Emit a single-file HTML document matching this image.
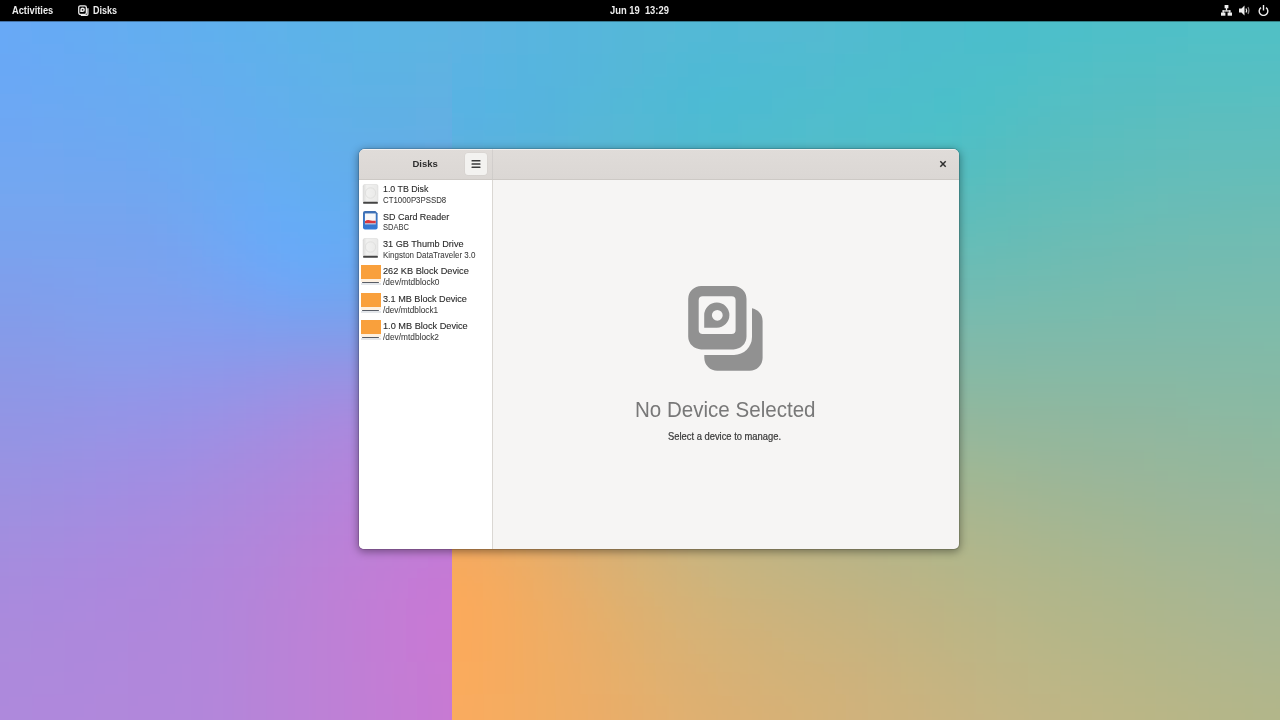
<!DOCTYPE html>
<html><head><meta charset="utf-8">
<style>
*{margin:0;padding:0;box-sizing:border-box}
html,body{width:1280px;height:720px;overflow:hidden;font-family:"Liberation Sans",sans-serif}
body{position:relative;background:#000}
.abs{position:absolute}
#bgL{left:0;top:0;width:452px;height:720px;overflow:hidden}
#bgR{left:452px;top:0;width:828px;height:720px;overflow:hidden}
.layer{position:absolute;left:0;top:0;width:100%;height:100%}
#topbar{will-change:transform;left:0;top:0;width:1280px;height:21px;background:#000;color:#ececec;font-weight:bold}
.t{position:absolute;white-space:nowrap;line-height:1}
#win{will-change:transform;left:359px;top:149px;width:600px;height:400px;border-radius:6px 6px 5px 5px;overflow:hidden;background:#f6f5f4;box-shadow:0 2px 9px 1px rgba(0,0,0,.38),0 0 0 1px rgba(0,0,0,.12)}
#hdr{left:0;top:0;width:600px;height:31px;background:linear-gradient(#e0dcd9,#dbd7d4);border-bottom:1px solid #cdc9c5;box-shadow:inset 0 1px 0 rgba(255,255,255,.6)}
#hsep{left:133px;top:0;width:1px;height:30px;background:rgba(0,0,0,.05)}
#side{left:0;top:31px;width:134px;height:369px;background:#fff;border-right:1px solid #dad7d3}
.ti{position:absolute;left:24px;font-size:9.9px;color:#2a2a2a;white-space:nowrap;line-height:1;transform:scaleX(.93);transform-origin:0 0;-webkit-text-stroke:.12px #2a2a2a}
.st{position:absolute;left:24px;font-size:8.6px;color:#3a3a3a;white-space:nowrap;line-height:1;transform:scaleX(.94);transform-origin:0 0;-webkit-text-stroke:.05px #3a3a3a}
</style></head><body>
<div id="bgL" class="abs"><svg class="abs" style="left:0;top:0" width="452" height="720"><defs><filter id="bl" x="-20%" y="-20%" width="140%" height="140%" filterUnits="objectBoundingBox"><feGaussianBlur stdDeviation="18"/></filter></defs><g filter="url(#bl)"><rect x="-64" y="-42" width="32" height="32" fill="#66a9f6"/><rect x="-32" y="-42" width="32" height="32" fill="#66a9f6"/><rect x="0" y="-42" width="32" height="32" fill="#66a9f6"/><rect x="32" y="-42" width="32" height="32" fill="#65aaf4"/><rect x="64" y="-42" width="32" height="32" fill="#64abf3"/><rect x="96" y="-42" width="32" height="32" fill="#63acf2"/><rect x="128" y="-42" width="32" height="32" fill="#62adf1"/><rect x="160" y="-42" width="32" height="32" fill="#61aeef"/><rect x="192" y="-42" width="32" height="32" fill="#60b0ed"/><rect x="224" y="-42" width="32" height="32" fill="#5eb1ec"/><rect x="256" y="-42" width="32" height="32" fill="#5db2ea"/><rect x="288" y="-42" width="32" height="32" fill="#5cb3e8"/><rect x="320" y="-42" width="32" height="32" fill="#5bb4e6"/><rect x="352" y="-42" width="32" height="32" fill="#5bb4e5"/><rect x="384" y="-42" width="32" height="32" fill="#5bb5e3"/><rect x="416" y="-42" width="32" height="32" fill="#5bb4e3"/><rect x="448" y="-42" width="32" height="32" fill="#5cb4e2"/><rect x="480" y="-42" width="32" height="32" fill="#5cb4e2"/><rect x="512" y="-42" width="32" height="32" fill="#5cb4e2"/><rect x="-64" y="-10" width="32" height="32" fill="#66a9f6"/><rect x="-32" y="-10" width="32" height="32" fill="#66a9f6"/><rect x="0" y="-10" width="32" height="32" fill="#66a9f6"/><rect x="32" y="-10" width="32" height="32" fill="#65aaf4"/><rect x="64" y="-10" width="32" height="32" fill="#64abf3"/><rect x="96" y="-10" width="32" height="32" fill="#63acf2"/><rect x="128" y="-10" width="32" height="32" fill="#62adf1"/><rect x="160" y="-10" width="32" height="32" fill="#61aeef"/><rect x="192" y="-10" width="32" height="32" fill="#60b0ed"/><rect x="224" y="-10" width="32" height="32" fill="#5eb1ec"/><rect x="256" y="-10" width="32" height="32" fill="#5db2ea"/><rect x="288" y="-10" width="32" height="32" fill="#5cb3e8"/><rect x="320" y="-10" width="32" height="32" fill="#5bb4e6"/><rect x="352" y="-10" width="32" height="32" fill="#5bb4e5"/><rect x="384" y="-10" width="32" height="32" fill="#5bb5e3"/><rect x="416" y="-10" width="32" height="32" fill="#5bb4e3"/><rect x="448" y="-10" width="32" height="32" fill="#5cb4e2"/><rect x="480" y="-10" width="32" height="32" fill="#5cb4e2"/><rect x="512" y="-10" width="32" height="32" fill="#5cb4e2"/><rect x="-64" y="22" width="32" height="32" fill="#67a9f6"/><rect x="-32" y="22" width="32" height="32" fill="#67a9f6"/><rect x="0" y="22" width="32" height="32" fill="#67a9f5"/><rect x="32" y="22" width="32" height="32" fill="#66aaf4"/><rect x="64" y="22" width="32" height="32" fill="#66abf3"/><rect x="96" y="22" width="32" height="32" fill="#65acf2"/><rect x="128" y="22" width="32" height="32" fill="#63adf0"/><rect x="160" y="22" width="32" height="32" fill="#62aeef"/><rect x="192" y="22" width="32" height="32" fill="#61afee"/><rect x="224" y="22" width="32" height="32" fill="#5fb0ec"/><rect x="256" y="22" width="32" height="32" fill="#5eb1ea"/><rect x="288" y="22" width="32" height="32" fill="#5db2e8"/><rect x="320" y="22" width="32" height="32" fill="#5cb3e6"/><rect x="352" y="22" width="32" height="32" fill="#5bb4e5"/><rect x="384" y="22" width="32" height="32" fill="#5bb4e3"/><rect x="416" y="22" width="32" height="32" fill="#5cb4e2"/><rect x="448" y="22" width="32" height="32" fill="#5db3e2"/><rect x="480" y="22" width="32" height="32" fill="#5db3e2"/><rect x="512" y="22" width="32" height="32" fill="#5db3e2"/><rect x="-64" y="54" width="32" height="32" fill="#6aa8f5"/><rect x="-32" y="54" width="32" height="32" fill="#6aa8f5"/><rect x="0" y="54" width="32" height="32" fill="#69a8f5"/><rect x="32" y="54" width="32" height="32" fill="#69a9f4"/><rect x="64" y="54" width="32" height="32" fill="#68aaf3"/><rect x="96" y="54" width="32" height="32" fill="#67abf2"/><rect x="128" y="54" width="32" height="32" fill="#66acf1"/><rect x="160" y="54" width="32" height="32" fill="#65adef"/><rect x="192" y="54" width="32" height="32" fill="#63aeee"/><rect x="224" y="54" width="32" height="32" fill="#62afed"/><rect x="256" y="54" width="32" height="32" fill="#60b0eb"/><rect x="288" y="54" width="32" height="32" fill="#5fb1e9"/><rect x="320" y="54" width="32" height="32" fill="#5eb2e7"/><rect x="352" y="54" width="32" height="32" fill="#5db3e5"/><rect x="384" y="54" width="32" height="32" fill="#5db3e3"/><rect x="416" y="54" width="32" height="32" fill="#5eb3e2"/><rect x="448" y="54" width="32" height="32" fill="#5fb2e2"/><rect x="480" y="54" width="32" height="32" fill="#5fb2e2"/><rect x="512" y="54" width="32" height="32" fill="#5fb2e2"/><rect x="-64" y="86" width="32" height="32" fill="#6ca8f4"/><rect x="-32" y="86" width="32" height="32" fill="#6ca8f4"/><rect x="0" y="86" width="32" height="32" fill="#6ca8f4"/><rect x="32" y="86" width="32" height="32" fill="#6ba9f3"/><rect x="64" y="86" width="32" height="32" fill="#6ba9f2"/><rect x="96" y="86" width="32" height="32" fill="#6aaaf1"/><rect x="128" y="86" width="32" height="32" fill="#68abf1"/><rect x="160" y="86" width="32" height="32" fill="#67acf0"/><rect x="192" y="86" width="32" height="32" fill="#65adef"/><rect x="224" y="86" width="32" height="32" fill="#63aeee"/><rect x="256" y="86" width="32" height="32" fill="#62afec"/><rect x="288" y="86" width="32" height="32" fill="#61b0ea"/><rect x="320" y="86" width="32" height="32" fill="#60b1e8"/><rect x="352" y="86" width="32" height="32" fill="#5fb1e5"/><rect x="384" y="86" width="32" height="32" fill="#5fb1e4"/><rect x="416" y="86" width="32" height="32" fill="#60b1e3"/><rect x="448" y="86" width="32" height="32" fill="#61b0e2"/><rect x="480" y="86" width="32" height="32" fill="#61b0e2"/><rect x="512" y="86" width="32" height="32" fill="#61b0e2"/><rect x="-64" y="118" width="32" height="32" fill="#6ea7f3"/><rect x="-32" y="118" width="32" height="32" fill="#6ea7f3"/><rect x="0" y="118" width="32" height="32" fill="#6ea7f3"/><rect x="32" y="118" width="32" height="32" fill="#6ea8f2"/><rect x="64" y="118" width="32" height="32" fill="#6da8f2"/><rect x="96" y="118" width="32" height="32" fill="#6ca9f1"/><rect x="128" y="118" width="32" height="32" fill="#6ba9f1"/><rect x="160" y="118" width="32" height="32" fill="#69aaf0"/><rect x="192" y="118" width="32" height="32" fill="#67acf0"/><rect x="224" y="118" width="32" height="32" fill="#65adef"/><rect x="256" y="118" width="32" height="32" fill="#63aeee"/><rect x="288" y="118" width="32" height="32" fill="#62afec"/><rect x="320" y="118" width="32" height="32" fill="#62afe9"/><rect x="352" y="118" width="32" height="32" fill="#62afe7"/><rect x="384" y="118" width="32" height="32" fill="#62afe5"/><rect x="416" y="118" width="32" height="32" fill="#63afe4"/><rect x="448" y="118" width="32" height="32" fill="#64aee3"/><rect x="480" y="118" width="32" height="32" fill="#64aee3"/><rect x="512" y="118" width="32" height="32" fill="#64aee3"/><rect x="-64" y="150" width="32" height="32" fill="#71a7f2"/><rect x="-32" y="150" width="32" height="32" fill="#71a7f2"/><rect x="0" y="150" width="32" height="32" fill="#71a7f2"/><rect x="32" y="150" width="32" height="32" fill="#71a7f1"/><rect x="64" y="150" width="32" height="32" fill="#70a7f1"/><rect x="96" y="150" width="32" height="32" fill="#6fa7f1"/><rect x="128" y="150" width="32" height="32" fill="#6ea8f1"/><rect x="160" y="150" width="32" height="32" fill="#6ca9f1"/><rect x="192" y="150" width="32" height="32" fill="#6aaaf1"/><rect x="224" y="150" width="32" height="32" fill="#67acf2"/><rect x="256" y="150" width="32" height="32" fill="#65adf1"/><rect x="288" y="150" width="32" height="32" fill="#63aeef"/><rect x="320" y="150" width="32" height="32" fill="#63aeec"/><rect x="352" y="150" width="32" height="32" fill="#63aee9"/><rect x="384" y="150" width="32" height="32" fill="#64ade7"/><rect x="416" y="150" width="32" height="32" fill="#66ade5"/><rect x="448" y="150" width="32" height="32" fill="#67ace4"/><rect x="480" y="150" width="32" height="32" fill="#67ace4"/><rect x="512" y="150" width="32" height="32" fill="#67ace4"/><rect x="-64" y="182" width="32" height="32" fill="#74a5f0"/><rect x="-32" y="182" width="32" height="32" fill="#74a5f0"/><rect x="0" y="182" width="32" height="32" fill="#74a6f0"/><rect x="32" y="182" width="32" height="32" fill="#74a6f0"/><rect x="64" y="182" width="32" height="32" fill="#73a6f0"/><rect x="96" y="182" width="32" height="32" fill="#73a6f0"/><rect x="128" y="182" width="32" height="32" fill="#72a6f0"/><rect x="160" y="182" width="32" height="32" fill="#6fa7f1"/><rect x="192" y="182" width="32" height="32" fill="#6ca9f2"/><rect x="224" y="182" width="32" height="32" fill="#69aaf4"/><rect x="256" y="182" width="32" height="32" fill="#66acf4"/><rect x="288" y="182" width="32" height="32" fill="#64adf3"/><rect x="320" y="182" width="32" height="32" fill="#64adf0"/><rect x="352" y="182" width="32" height="32" fill="#65aced"/><rect x="384" y="182" width="32" height="32" fill="#66acea"/><rect x="416" y="182" width="32" height="32" fill="#69aae7"/><rect x="448" y="182" width="32" height="32" fill="#6ba9e5"/><rect x="480" y="182" width="32" height="32" fill="#6ba9e5"/><rect x="512" y="182" width="32" height="32" fill="#6ba9e5"/><rect x="-64" y="214" width="32" height="32" fill="#77a4ef"/><rect x="-32" y="214" width="32" height="32" fill="#77a4ef"/><rect x="0" y="214" width="32" height="32" fill="#77a4ef"/><rect x="32" y="214" width="32" height="32" fill="#77a4ef"/><rect x="64" y="214" width="32" height="32" fill="#77a4ef"/><rect x="96" y="214" width="32" height="32" fill="#77a4ef"/><rect x="128" y="214" width="32" height="32" fill="#76a4ef"/><rect x="160" y="214" width="32" height="32" fill="#73a5f1"/><rect x="192" y="214" width="32" height="32" fill="#70a7f3"/><rect x="224" y="214" width="32" height="32" fill="#6ca9f5"/><rect x="256" y="214" width="32" height="32" fill="#68aaf7"/><rect x="288" y="214" width="32" height="32" fill="#65acf7"/><rect x="320" y="214" width="32" height="32" fill="#65acf4"/><rect x="352" y="214" width="32" height="32" fill="#67abf0"/><rect x="384" y="214" width="32" height="32" fill="#69a9ec"/><rect x="416" y="214" width="32" height="32" fill="#6da8e8"/><rect x="448" y="214" width="32" height="32" fill="#6fa6e6"/><rect x="480" y="214" width="32" height="32" fill="#6fa6e6"/><rect x="512" y="214" width="32" height="32" fill="#6fa6e6"/><rect x="-64" y="246" width="32" height="32" fill="#7ba1ed"/><rect x="-32" y="246" width="32" height="32" fill="#7ba1ed"/><rect x="0" y="246" width="32" height="32" fill="#7ba1ed"/><rect x="32" y="246" width="32" height="32" fill="#7ba2ed"/><rect x="64" y="246" width="32" height="32" fill="#7ba2ee"/><rect x="96" y="246" width="32" height="32" fill="#7aa2ee"/><rect x="128" y="246" width="32" height="32" fill="#7aa2ef"/><rect x="160" y="246" width="32" height="32" fill="#78a3f0"/><rect x="192" y="246" width="32" height="32" fill="#74a5f2"/><rect x="224" y="246" width="32" height="32" fill="#70a6f5"/><rect x="256" y="246" width="32" height="32" fill="#6ca8f7"/><rect x="288" y="246" width="32" height="32" fill="#69aaf8"/><rect x="320" y="246" width="32" height="32" fill="#68a9f5"/><rect x="352" y="246" width="32" height="32" fill="#6ba8f0"/><rect x="384" y="246" width="32" height="32" fill="#6fa6ec"/><rect x="416" y="246" width="32" height="32" fill="#73a4e8"/><rect x="448" y="246" width="32" height="32" fill="#75a3e6"/><rect x="480" y="246" width="32" height="32" fill="#75a3e6"/><rect x="512" y="246" width="32" height="32" fill="#75a3e6"/><rect x="-64" y="278" width="32" height="32" fill="#809eeb"/><rect x="-32" y="278" width="32" height="32" fill="#809eeb"/><rect x="0" y="278" width="32" height="32" fill="#809eeb"/><rect x="32" y="278" width="32" height="32" fill="#7f9fec"/><rect x="64" y="278" width="32" height="32" fill="#7fa0ed"/><rect x="96" y="278" width="32" height="32" fill="#7ea1ee"/><rect x="128" y="278" width="32" height="32" fill="#7ea1ee"/><rect x="160" y="278" width="32" height="32" fill="#7da1ef"/><rect x="192" y="278" width="32" height="32" fill="#7aa2f1"/><rect x="224" y="278" width="32" height="32" fill="#77a3f2"/><rect x="256" y="278" width="32" height="32" fill="#74a4f4"/><rect x="288" y="278" width="32" height="32" fill="#71a5f4"/><rect x="320" y="278" width="32" height="32" fill="#6fa5f1"/><rect x="352" y="278" width="32" height="32" fill="#72a4ee"/><rect x="384" y="278" width="32" height="32" fill="#76a2ea"/><rect x="416" y="278" width="32" height="32" fill="#7ba0e7"/><rect x="448" y="278" width="32" height="32" fill="#7d9ee5"/><rect x="480" y="278" width="32" height="32" fill="#7d9ee5"/><rect x="512" y="278" width="32" height="32" fill="#7d9ee5"/><rect x="-64" y="310" width="32" height="32" fill="#849be9"/><rect x="-32" y="310" width="32" height="32" fill="#849be9"/><rect x="0" y="310" width="32" height="32" fill="#849ce9"/><rect x="32" y="310" width="32" height="32" fill="#849dea"/><rect x="64" y="310" width="32" height="32" fill="#839eeb"/><rect x="96" y="310" width="32" height="32" fill="#839eec"/><rect x="128" y="310" width="32" height="32" fill="#839eed"/><rect x="160" y="310" width="32" height="32" fill="#839eed"/><rect x="192" y="310" width="32" height="32" fill="#829eee"/><rect x="224" y="310" width="32" height="32" fill="#809eee"/><rect x="256" y="310" width="32" height="32" fill="#7e9fee"/><rect x="288" y="310" width="32" height="32" fill="#7d9fed"/><rect x="320" y="310" width="32" height="32" fill="#7c9fec"/><rect x="352" y="310" width="32" height="32" fill="#7e9eea"/><rect x="384" y="310" width="32" height="32" fill="#829ce7"/><rect x="416" y="310" width="32" height="32" fill="#859ae5"/><rect x="448" y="310" width="32" height="32" fill="#8799e3"/><rect x="480" y="310" width="32" height="32" fill="#8799e3"/><rect x="512" y="310" width="32" height="32" fill="#8799e3"/><rect x="-64" y="342" width="32" height="32" fill="#8999e7"/><rect x="-32" y="342" width="32" height="32" fill="#8999e7"/><rect x="0" y="342" width="32" height="32" fill="#8999e7"/><rect x="32" y="342" width="32" height="32" fill="#899ae8"/><rect x="64" y="342" width="32" height="32" fill="#899be9"/><rect x="96" y="342" width="32" height="32" fill="#899bea"/><rect x="128" y="342" width="32" height="32" fill="#899beb"/><rect x="160" y="342" width="32" height="32" fill="#8a9aeb"/><rect x="192" y="342" width="32" height="32" fill="#8a9aeb"/><rect x="224" y="342" width="32" height="32" fill="#8a99ea"/><rect x="256" y="342" width="32" height="32" fill="#8b99e9"/><rect x="288" y="342" width="32" height="32" fill="#8c98e7"/><rect x="320" y="342" width="32" height="32" fill="#8d97e6"/><rect x="352" y="342" width="32" height="32" fill="#8e96e5"/><rect x="384" y="342" width="32" height="32" fill="#8f95e4"/><rect x="416" y="342" width="32" height="32" fill="#9194e2"/><rect x="448" y="342" width="32" height="32" fill="#9393e1"/><rect x="480" y="342" width="32" height="32" fill="#9393e1"/><rect x="512" y="342" width="32" height="32" fill="#9393e1"/><rect x="-64" y="374" width="32" height="32" fill="#8d97e5"/><rect x="-32" y="374" width="32" height="32" fill="#8d97e5"/><rect x="0" y="374" width="32" height="32" fill="#8e97e6"/><rect x="32" y="374" width="32" height="32" fill="#8e97e6"/><rect x="64" y="374" width="32" height="32" fill="#8e97e7"/><rect x="96" y="374" width="32" height="32" fill="#8f97e8"/><rect x="128" y="374" width="32" height="32" fill="#9097e8"/><rect x="160" y="374" width="32" height="32" fill="#9196e8"/><rect x="192" y="374" width="32" height="32" fill="#9395e8"/><rect x="224" y="374" width="32" height="32" fill="#9494e6"/><rect x="256" y="374" width="32" height="32" fill="#9793e5"/><rect x="288" y="374" width="32" height="32" fill="#9a91e3"/><rect x="320" y="374" width="32" height="32" fill="#9c90e2"/><rect x="352" y="374" width="32" height="32" fill="#9d8fe1"/><rect x="384" y="374" width="32" height="32" fill="#9d8fe0"/><rect x="416" y="374" width="32" height="32" fill="#9d8edf"/><rect x="448" y="374" width="32" height="32" fill="#9e8edf"/><rect x="480" y="374" width="32" height="32" fill="#9e8edf"/><rect x="512" y="374" width="32" height="32" fill="#9e8edf"/><rect x="-64" y="406" width="32" height="32" fill="#9295e4"/><rect x="-32" y="406" width="32" height="32" fill="#9295e4"/><rect x="0" y="406" width="32" height="32" fill="#9295e4"/><rect x="32" y="406" width="32" height="32" fill="#9395e5"/><rect x="64" y="406" width="32" height="32" fill="#9494e5"/><rect x="96" y="406" width="32" height="32" fill="#9594e6"/><rect x="128" y="406" width="32" height="32" fill="#9693e6"/><rect x="160" y="406" width="32" height="32" fill="#9892e5"/><rect x="192" y="406" width="32" height="32" fill="#9a91e5"/><rect x="224" y="406" width="32" height="32" fill="#9d90e3"/><rect x="256" y="406" width="32" height="32" fill="#a08ee2"/><rect x="288" y="406" width="32" height="32" fill="#a48ce0"/><rect x="320" y="406" width="32" height="32" fill="#a88adf"/><rect x="352" y="406" width="32" height="32" fill="#a989de"/><rect x="384" y="406" width="32" height="32" fill="#a889dd"/><rect x="416" y="406" width="32" height="32" fill="#a889dd"/><rect x="448" y="406" width="32" height="32" fill="#a888dc"/><rect x="480" y="406" width="32" height="32" fill="#a888dc"/><rect x="512" y="406" width="32" height="32" fill="#a888dc"/><rect x="-64" y="438" width="32" height="32" fill="#9693e2"/><rect x="-32" y="438" width="32" height="32" fill="#9693e2"/><rect x="0" y="438" width="32" height="32" fill="#9793e3"/><rect x="32" y="438" width="32" height="32" fill="#9892e3"/><rect x="64" y="438" width="32" height="32" fill="#9992e3"/><rect x="96" y="438" width="32" height="32" fill="#9b91e4"/><rect x="128" y="438" width="32" height="32" fill="#9c90e3"/><rect x="160" y="438" width="32" height="32" fill="#9e8fe3"/><rect x="192" y="438" width="32" height="32" fill="#a18ee2"/><rect x="224" y="438" width="32" height="32" fill="#a48ce0"/><rect x="256" y="438" width="32" height="32" fill="#a78bdf"/><rect x="288" y="438" width="32" height="32" fill="#ab89dd"/><rect x="320" y="438" width="32" height="32" fill="#ae87dc"/><rect x="352" y="438" width="32" height="32" fill="#b085dc"/><rect x="384" y="438" width="32" height="32" fill="#b185db"/><rect x="416" y="438" width="32" height="32" fill="#b184da"/><rect x="448" y="438" width="32" height="32" fill="#b184da"/><rect x="480" y="438" width="32" height="32" fill="#b184da"/><rect x="512" y="438" width="32" height="32" fill="#b184da"/><rect x="-64" y="470" width="32" height="32" fill="#9b91e1"/><rect x="-32" y="470" width="32" height="32" fill="#9b91e1"/><rect x="0" y="470" width="32" height="32" fill="#9b91e1"/><rect x="32" y="470" width="32" height="32" fill="#9d90e1"/><rect x="64" y="470" width="32" height="32" fill="#9e8fe2"/><rect x="96" y="470" width="32" height="32" fill="#a08ee2"/><rect x="128" y="470" width="32" height="32" fill="#a28de1"/><rect x="160" y="470" width="32" height="32" fill="#a48ce1"/><rect x="192" y="470" width="32" height="32" fill="#a68bdf"/><rect x="224" y="470" width="32" height="32" fill="#a98ade"/><rect x="256" y="470" width="32" height="32" fill="#ac88dd"/><rect x="288" y="470" width="32" height="32" fill="#af86db"/><rect x="320" y="470" width="32" height="32" fill="#b384da"/><rect x="352" y="470" width="32" height="32" fill="#b683da"/><rect x="384" y="470" width="32" height="32" fill="#b781d9"/><rect x="416" y="470" width="32" height="32" fill="#b880d9"/><rect x="448" y="470" width="32" height="32" fill="#b880d8"/><rect x="480" y="470" width="32" height="32" fill="#b880d8"/><rect x="512" y="470" width="32" height="32" fill="#b880d8"/><rect x="-64" y="502" width="32" height="32" fill="#9f8fe0"/><rect x="-32" y="502" width="32" height="32" fill="#9f8fe0"/><rect x="0" y="502" width="32" height="32" fill="#a08fe0"/><rect x="32" y="502" width="32" height="32" fill="#a18ee0"/><rect x="64" y="502" width="32" height="32" fill="#a38de0"/><rect x="96" y="502" width="32" height="32" fill="#a58ce0"/><rect x="128" y="502" width="32" height="32" fill="#a68bdf"/><rect x="160" y="502" width="32" height="32" fill="#a88adf"/><rect x="192" y="502" width="32" height="32" fill="#aa89dd"/><rect x="224" y="502" width="32" height="32" fill="#ad88dc"/><rect x="256" y="502" width="32" height="32" fill="#b086db"/><rect x="288" y="502" width="32" height="32" fill="#b384da"/><rect x="320" y="502" width="32" height="32" fill="#b782d9"/><rect x="352" y="502" width="32" height="32" fill="#ba80d8"/><rect x="384" y="502" width="32" height="32" fill="#bc7fd8"/><rect x="416" y="502" width="32" height="32" fill="#be7dd7"/><rect x="448" y="502" width="32" height="32" fill="#be7dd7"/><rect x="480" y="502" width="32" height="32" fill="#be7dd7"/><rect x="512" y="502" width="32" height="32" fill="#be7dd7"/><rect x="-64" y="534" width="32" height="32" fill="#a38ddf"/><rect x="-32" y="534" width="32" height="32" fill="#a38ddf"/><rect x="0" y="534" width="32" height="32" fill="#a48ddf"/><rect x="32" y="534" width="32" height="32" fill="#a58cdf"/><rect x="64" y="534" width="32" height="32" fill="#a78bdf"/><rect x="96" y="534" width="32" height="32" fill="#a88adf"/><rect x="128" y="534" width="32" height="32" fill="#aa89de"/><rect x="160" y="534" width="32" height="32" fill="#ab88dd"/><rect x="192" y="534" width="32" height="32" fill="#ae87dc"/><rect x="224" y="534" width="32" height="32" fill="#b086db"/><rect x="256" y="534" width="32" height="32" fill="#b385d9"/><rect x="288" y="534" width="32" height="32" fill="#b783d8"/><rect x="320" y="534" width="32" height="32" fill="#ba81d8"/><rect x="352" y="534" width="32" height="32" fill="#be7fd7"/><rect x="384" y="534" width="32" height="32" fill="#c07dd7"/><rect x="416" y="534" width="32" height="32" fill="#c27bd6"/><rect x="448" y="534" width="32" height="32" fill="#c37ad6"/><rect x="480" y="534" width="32" height="32" fill="#c37ad6"/><rect x="512" y="534" width="32" height="32" fill="#c37ad6"/><rect x="-64" y="566" width="32" height="32" fill="#a68cdd"/><rect x="-32" y="566" width="32" height="32" fill="#a68cdd"/><rect x="0" y="566" width="32" height="32" fill="#a78bdd"/><rect x="32" y="566" width="32" height="32" fill="#a88ade"/><rect x="64" y="566" width="32" height="32" fill="#aa89de"/><rect x="96" y="566" width="32" height="32" fill="#ab88dd"/><rect x="128" y="566" width="32" height="32" fill="#ac88dd"/><rect x="160" y="566" width="32" height="32" fill="#ae87dc"/><rect x="192" y="566" width="32" height="32" fill="#b086db"/><rect x="224" y="566" width="32" height="32" fill="#b285da"/><rect x="256" y="566" width="32" height="32" fill="#b584d9"/><rect x="288" y="566" width="32" height="32" fill="#b982d8"/><rect x="320" y="566" width="32" height="32" fill="#bd80d7"/><rect x="352" y="566" width="32" height="32" fill="#c07ed6"/><rect x="384" y="566" width="32" height="32" fill="#c37bd6"/><rect x="416" y="566" width="32" height="32" fill="#c579d5"/><rect x="448" y="566" width="32" height="32" fill="#c679d5"/><rect x="480" y="566" width="32" height="32" fill="#c679d5"/><rect x="512" y="566" width="32" height="32" fill="#c679d5"/><rect x="-64" y="598" width="32" height="32" fill="#a98bdd"/><rect x="-32" y="598" width="32" height="32" fill="#a98bdd"/><rect x="0" y="598" width="32" height="32" fill="#aa8add"/><rect x="32" y="598" width="32" height="32" fill="#ab89dd"/><rect x="64" y="598" width="32" height="32" fill="#ac89dd"/><rect x="96" y="598" width="32" height="32" fill="#ad88dd"/><rect x="128" y="598" width="32" height="32" fill="#ae87dc"/><rect x="160" y="598" width="32" height="32" fill="#af87db"/><rect x="192" y="598" width="32" height="32" fill="#b186da"/><rect x="224" y="598" width="32" height="32" fill="#b485d9"/><rect x="256" y="598" width="32" height="32" fill="#b783d8"/><rect x="288" y="598" width="32" height="32" fill="#ba82d7"/><rect x="320" y="598" width="32" height="32" fill="#be80d6"/><rect x="352" y="598" width="32" height="32" fill="#c17dd6"/><rect x="384" y="598" width="32" height="32" fill="#c47bd5"/><rect x="416" y="598" width="32" height="32" fill="#c779d5"/><rect x="448" y="598" width="32" height="32" fill="#c778d4"/><rect x="480" y="598" width="32" height="32" fill="#c778d4"/><rect x="512" y="598" width="32" height="32" fill="#c778d4"/><rect x="-64" y="630" width="32" height="32" fill="#ab8adc"/><rect x="-32" y="630" width="32" height="32" fill="#ab8adc"/><rect x="0" y="630" width="32" height="32" fill="#ab8adc"/><rect x="32" y="630" width="32" height="32" fill="#ac89dc"/><rect x="64" y="630" width="32" height="32" fill="#ad88dc"/><rect x="96" y="630" width="32" height="32" fill="#ae88dc"/><rect x="128" y="630" width="32" height="32" fill="#af87db"/><rect x="160" y="630" width="32" height="32" fill="#b087db"/><rect x="192" y="630" width="32" height="32" fill="#b286da"/><rect x="224" y="630" width="32" height="32" fill="#b485d9"/><rect x="256" y="630" width="32" height="32" fill="#b783d8"/><rect x="288" y="630" width="32" height="32" fill="#bb82d7"/><rect x="320" y="630" width="32" height="32" fill="#be80d6"/><rect x="352" y="630" width="32" height="32" fill="#c17dd5"/><rect x="384" y="630" width="32" height="32" fill="#c47bd5"/><rect x="416" y="630" width="32" height="32" fill="#c779d4"/><rect x="448" y="630" width="32" height="32" fill="#c878d4"/><rect x="480" y="630" width="32" height="32" fill="#c878d4"/><rect x="512" y="630" width="32" height="32" fill="#c878d4"/><rect x="-64" y="662" width="32" height="32" fill="#ac89dc"/><rect x="-32" y="662" width="32" height="32" fill="#ac89dc"/><rect x="0" y="662" width="32" height="32" fill="#ad89dc"/><rect x="32" y="662" width="32" height="32" fill="#ae89dc"/><rect x="64" y="662" width="32" height="32" fill="#ae88dc"/><rect x="96" y="662" width="32" height="32" fill="#af88dc"/><rect x="128" y="662" width="32" height="32" fill="#b087db"/><rect x="160" y="662" width="32" height="32" fill="#b187db"/><rect x="192" y="662" width="32" height="32" fill="#b286da"/><rect x="224" y="662" width="32" height="32" fill="#b585d9"/><rect x="256" y="662" width="32" height="32" fill="#b883d8"/><rect x="288" y="662" width="32" height="32" fill="#bb82d7"/><rect x="320" y="662" width="32" height="32" fill="#be80d6"/><rect x="352" y="662" width="32" height="32" fill="#c17ed5"/><rect x="384" y="662" width="32" height="32" fill="#c47cd4"/><rect x="416" y="662" width="32" height="32" fill="#c67ad3"/><rect x="448" y="662" width="32" height="32" fill="#c779d3"/><rect x="480" y="662" width="32" height="32" fill="#c779d3"/><rect x="512" y="662" width="32" height="32" fill="#c779d3"/><rect x="-64" y="694" width="32" height="32" fill="#ae89dc"/><rect x="-32" y="694" width="32" height="32" fill="#ae89dc"/><rect x="0" y="694" width="32" height="32" fill="#ae89dc"/><rect x="32" y="694" width="32" height="32" fill="#af88dc"/><rect x="64" y="694" width="32" height="32" fill="#af88dc"/><rect x="96" y="694" width="32" height="32" fill="#b088db"/><rect x="128" y="694" width="32" height="32" fill="#b187db"/><rect x="160" y="694" width="32" height="32" fill="#b187db"/><rect x="192" y="694" width="32" height="32" fill="#b386da"/><rect x="224" y="694" width="32" height="32" fill="#b585d9"/><rect x="256" y="694" width="32" height="32" fill="#b883d8"/><rect x="288" y="694" width="32" height="32" fill="#bb82d7"/><rect x="320" y="694" width="32" height="32" fill="#be80d6"/><rect x="352" y="694" width="32" height="32" fill="#c17ed5"/><rect x="384" y="694" width="32" height="32" fill="#c37cd4"/><rect x="416" y="694" width="32" height="32" fill="#c67ad3"/><rect x="448" y="694" width="32" height="32" fill="#c779d3"/><rect x="480" y="694" width="32" height="32" fill="#c779d3"/><rect x="512" y="694" width="32" height="32" fill="#c779d3"/><rect x="-64" y="726" width="32" height="32" fill="#ae89dc"/><rect x="-32" y="726" width="32" height="32" fill="#ae89dc"/><rect x="0" y="726" width="32" height="32" fill="#ae89dc"/><rect x="32" y="726" width="32" height="32" fill="#af88dc"/><rect x="64" y="726" width="32" height="32" fill="#b088dc"/><rect x="96" y="726" width="32" height="32" fill="#b088db"/><rect x="128" y="726" width="32" height="32" fill="#b187db"/><rect x="160" y="726" width="32" height="32" fill="#b287db"/><rect x="192" y="726" width="32" height="32" fill="#b386da"/><rect x="224" y="726" width="32" height="32" fill="#b585d9"/><rect x="256" y="726" width="32" height="32" fill="#b883d8"/><rect x="288" y="726" width="32" height="32" fill="#bb81d7"/><rect x="320" y="726" width="32" height="32" fill="#be80d6"/><rect x="352" y="726" width="32" height="32" fill="#c17ed5"/><rect x="384" y="726" width="32" height="32" fill="#c37cd4"/><rect x="416" y="726" width="32" height="32" fill="#c67ad3"/><rect x="448" y="726" width="32" height="32" fill="#c779d3"/><rect x="480" y="726" width="32" height="32" fill="#c779d3"/><rect x="512" y="726" width="32" height="32" fill="#c779d3"/><rect x="-64" y="758" width="32" height="32" fill="#ae89dc"/><rect x="-32" y="758" width="32" height="32" fill="#ae89dc"/><rect x="0" y="758" width="32" height="32" fill="#ae89dc"/><rect x="32" y="758" width="32" height="32" fill="#af88dc"/><rect x="64" y="758" width="32" height="32" fill="#b088dc"/><rect x="96" y="758" width="32" height="32" fill="#b088db"/><rect x="128" y="758" width="32" height="32" fill="#b187db"/><rect x="160" y="758" width="32" height="32" fill="#b287db"/><rect x="192" y="758" width="32" height="32" fill="#b386da"/><rect x="224" y="758" width="32" height="32" fill="#b585d9"/><rect x="256" y="758" width="32" height="32" fill="#b883d8"/><rect x="288" y="758" width="32" height="32" fill="#bb81d7"/><rect x="320" y="758" width="32" height="32" fill="#be80d6"/><rect x="352" y="758" width="32" height="32" fill="#c17ed5"/><rect x="384" y="758" width="32" height="32" fill="#c37cd4"/><rect x="416" y="758" width="32" height="32" fill="#c67ad3"/><rect x="448" y="758" width="32" height="32" fill="#c779d3"/><rect x="480" y="758" width="32" height="32" fill="#c779d3"/><rect x="512" y="758" width="32" height="32" fill="#c779d3"/></g></svg></div>
<div id="bgR" class="abs"><svg class="abs" style="left:0;top:0" width="828" height="720"><defs><filter id="br" x="-20%" y="-20%" width="140%" height="140%" filterUnits="objectBoundingBox"><feGaussianBlur stdDeviation="18"/></filter></defs><g filter="url(#br)"><rect x="-64" y="-42" width="32" height="32" fill="#5eb3e2"/><rect x="-32" y="-42" width="32" height="32" fill="#5eb3e2"/><rect x="0" y="-42" width="32" height="32" fill="#5db3e2"/><rect x="32" y="-42" width="32" height="32" fill="#5bb4e1"/><rect x="64" y="-42" width="32" height="32" fill="#59b5df"/><rect x="96" y="-42" width="32" height="32" fill="#58b5dd"/><rect x="128" y="-42" width="32" height="32" fill="#57b6db"/><rect x="160" y="-42" width="32" height="32" fill="#56b7d9"/><rect x="192" y="-42" width="32" height="32" fill="#54b7d8"/><rect x="224" y="-42" width="32" height="32" fill="#53b8d7"/><rect x="256" y="-42" width="32" height="32" fill="#52b9d6"/><rect x="288" y="-42" width="32" height="32" fill="#52b9d5"/><rect x="320" y="-42" width="32" height="32" fill="#52b9d3"/><rect x="352" y="-42" width="32" height="32" fill="#52bad2"/><rect x="384" y="-42" width="32" height="32" fill="#51bbd1"/><rect x="416" y="-42" width="32" height="32" fill="#4fbbcf"/><rect x="448" y="-42" width="32" height="32" fill="#4ebcce"/><rect x="480" y="-42" width="32" height="32" fill="#4dbdce"/><rect x="512" y="-42" width="32" height="32" fill="#4cbecd"/><rect x="544" y="-42" width="32" height="32" fill="#4cbecc"/><rect x="576" y="-42" width="32" height="32" fill="#4cbfcb"/><rect x="608" y="-42" width="32" height="32" fill="#4dbfca"/><rect x="640" y="-42" width="32" height="32" fill="#4ebfc9"/><rect x="672" y="-42" width="32" height="32" fill="#4ebfc9"/><rect x="704" y="-42" width="32" height="32" fill="#4fbfc8"/><rect x="736" y="-42" width="32" height="32" fill="#4fc0c8"/><rect x="768" y="-42" width="32" height="32" fill="#4fc0c7"/><rect x="800" y="-42" width="32" height="32" fill="#4fc0c7"/><rect x="832" y="-42" width="32" height="32" fill="#4fc0c7"/><rect x="864" y="-42" width="32" height="32" fill="#4fc0c7"/><rect x="-64" y="-10" width="32" height="32" fill="#5eb3e2"/><rect x="-32" y="-10" width="32" height="32" fill="#5eb3e2"/><rect x="0" y="-10" width="32" height="32" fill="#5db3e2"/><rect x="32" y="-10" width="32" height="32" fill="#5bb4e1"/><rect x="64" y="-10" width="32" height="32" fill="#59b5df"/><rect x="96" y="-10" width="32" height="32" fill="#58b5dd"/><rect x="128" y="-10" width="32" height="32" fill="#57b6db"/><rect x="160" y="-10" width="32" height="32" fill="#56b7d9"/><rect x="192" y="-10" width="32" height="32" fill="#54b7d8"/><rect x="224" y="-10" width="32" height="32" fill="#53b8d7"/><rect x="256" y="-10" width="32" height="32" fill="#52b9d6"/><rect x="288" y="-10" width="32" height="32" fill="#52b9d5"/><rect x="320" y="-10" width="32" height="32" fill="#52b9d3"/><rect x="352" y="-10" width="32" height="32" fill="#52bad2"/><rect x="384" y="-10" width="32" height="32" fill="#51bbd1"/><rect x="416" y="-10" width="32" height="32" fill="#4fbbcf"/><rect x="448" y="-10" width="32" height="32" fill="#4ebcce"/><rect x="480" y="-10" width="32" height="32" fill="#4dbdce"/><rect x="512" y="-10" width="32" height="32" fill="#4cbecd"/><rect x="544" y="-10" width="32" height="32" fill="#4cbecc"/><rect x="576" y="-10" width="32" height="32" fill="#4cbfcb"/><rect x="608" y="-10" width="32" height="32" fill="#4dbfca"/><rect x="640" y="-10" width="32" height="32" fill="#4ebfc9"/><rect x="672" y="-10" width="32" height="32" fill="#4ebfc9"/><rect x="704" y="-10" width="32" height="32" fill="#4fbfc8"/><rect x="736" y="-10" width="32" height="32" fill="#4fc0c8"/><rect x="768" y="-10" width="32" height="32" fill="#4fc0c7"/><rect x="800" y="-10" width="32" height="32" fill="#4fc0c7"/><rect x="832" y="-10" width="32" height="32" fill="#4fc0c7"/><rect x="864" y="-10" width="32" height="32" fill="#4fc0c7"/><rect x="-64" y="22" width="32" height="32" fill="#5eb3e2"/><rect x="-32" y="22" width="32" height="32" fill="#5eb3e2"/><rect x="0" y="22" width="32" height="32" fill="#5cb3e2"/><rect x="32" y="22" width="32" height="32" fill="#5ab4e1"/><rect x="64" y="22" width="32" height="32" fill="#58b5df"/><rect x="96" y="22" width="32" height="32" fill="#57b5dd"/><rect x="128" y="22" width="32" height="32" fill="#56b6db"/><rect x="160" y="22" width="32" height="32" fill="#55b7d8"/><rect x="192" y="22" width="32" height="32" fill="#54b8d7"/><rect x="224" y="22" width="32" height="32" fill="#52b9d6"/><rect x="256" y="22" width="32" height="32" fill="#51b9d5"/><rect x="288" y="22" width="32" height="32" fill="#52bad4"/><rect x="320" y="22" width="32" height="32" fill="#52bad3"/><rect x="352" y="22" width="32" height="32" fill="#52bad1"/><rect x="384" y="22" width="32" height="32" fill="#51bbd0"/><rect x="416" y="22" width="32" height="32" fill="#4fbcce"/><rect x="448" y="22" width="32" height="32" fill="#4ebccd"/><rect x="480" y="22" width="32" height="32" fill="#4dbdcd"/><rect x="512" y="22" width="32" height="32" fill="#4cbecc"/><rect x="544" y="22" width="32" height="32" fill="#4cbecb"/><rect x="576" y="22" width="32" height="32" fill="#4dbfca"/><rect x="608" y="22" width="32" height="32" fill="#4ebfc9"/><rect x="640" y="22" width="32" height="32" fill="#4fbfc8"/><rect x="672" y="22" width="32" height="32" fill="#50bfc7"/><rect x="704" y="22" width="32" height="32" fill="#50bfc7"/><rect x="736" y="22" width="32" height="32" fill="#51c0c6"/><rect x="768" y="22" width="32" height="32" fill="#51c0c6"/><rect x="800" y="22" width="32" height="32" fill="#51c0c5"/><rect x="832" y="22" width="32" height="32" fill="#51c0c5"/><rect x="864" y="22" width="32" height="32" fill="#51c0c5"/><rect x="-64" y="54" width="32" height="32" fill="#5cb3e3"/><rect x="-32" y="54" width="32" height="32" fill="#5cb3e3"/><rect x="0" y="54" width="32" height="32" fill="#5ab3e3"/><rect x="32" y="54" width="32" height="32" fill="#58b4e1"/><rect x="64" y="54" width="32" height="32" fill="#57b5df"/><rect x="96" y="54" width="32" height="32" fill="#56b5dd"/><rect x="128" y="54" width="32" height="32" fill="#55b6da"/><rect x="160" y="54" width="32" height="32" fill="#54b7d8"/><rect x="192" y="54" width="32" height="32" fill="#52b8d6"/><rect x="224" y="54" width="32" height="32" fill="#50b9d5"/><rect x="256" y="54" width="32" height="32" fill="#4fbad4"/><rect x="288" y="54" width="32" height="32" fill="#50bad3"/><rect x="320" y="54" width="32" height="32" fill="#50bbd1"/><rect x="352" y="54" width="32" height="32" fill="#51bbd0"/><rect x="384" y="54" width="32" height="32" fill="#50bcce"/><rect x="416" y="54" width="32" height="32" fill="#4fbccd"/><rect x="448" y="54" width="32" height="32" fill="#4ebdcc"/><rect x="480" y="54" width="32" height="32" fill="#4dbecb"/><rect x="512" y="54" width="32" height="32" fill="#4dbfca"/><rect x="544" y="54" width="32" height="32" fill="#4ebfc9"/><rect x="576" y="54" width="32" height="32" fill="#4fbfc7"/><rect x="608" y="54" width="32" height="32" fill="#51bfc6"/><rect x="640" y="54" width="32" height="32" fill="#52bfc5"/><rect x="672" y="54" width="32" height="32" fill="#53bfc4"/><rect x="704" y="54" width="32" height="32" fill="#54bfc4"/><rect x="736" y="54" width="32" height="32" fill="#55bfc3"/><rect x="768" y="54" width="32" height="32" fill="#55bfc3"/><rect x="800" y="54" width="32" height="32" fill="#55bfc3"/><rect x="832" y="54" width="32" height="32" fill="#55c0c2"/><rect x="864" y="54" width="32" height="32" fill="#55c0c2"/><rect x="-64" y="86" width="32" height="32" fill="#5ab2e3"/><rect x="-32" y="86" width="32" height="32" fill="#5ab2e3"/><rect x="0" y="86" width="32" height="32" fill="#59b3e3"/><rect x="32" y="86" width="32" height="32" fill="#57b4e2"/><rect x="64" y="86" width="32" height="32" fill="#56b4df"/><rect x="96" y="86" width="32" height="32" fill="#55b5dc"/><rect x="128" y="86" width="32" height="32" fill="#54b7d9"/><rect x="160" y="86" width="32" height="32" fill="#53b8d7"/><rect x="192" y="86" width="32" height="32" fill="#50b9d5"/><rect x="224" y="86" width="32" height="32" fill="#4ebad4"/><rect x="256" y="86" width="32" height="32" fill="#4ebbd3"/><rect x="288" y="86" width="32" height="32" fill="#4ebbd1"/><rect x="320" y="86" width="32" height="32" fill="#4fbccf"/><rect x="352" y="86" width="32" height="32" fill="#50bcce"/><rect x="384" y="86" width="32" height="32" fill="#4fbdcd"/><rect x="416" y="86" width="32" height="32" fill="#4ebecc"/><rect x="448" y="86" width="32" height="32" fill="#4dbfcb"/><rect x="480" y="86" width="32" height="32" fill="#4cbfca"/><rect x="512" y="86" width="32" height="32" fill="#4dbfc8"/><rect x="544" y="86" width="32" height="32" fill="#4fbfc6"/><rect x="576" y="86" width="32" height="32" fill="#52bfc4"/><rect x="608" y="86" width="32" height="32" fill="#54bfc3"/><rect x="640" y="86" width="32" height="32" fill="#56bec2"/><rect x="672" y="86" width="32" height="32" fill="#57bec1"/><rect x="704" y="86" width="32" height="32" fill="#58bec1"/><rect x="736" y="86" width="32" height="32" fill="#59bfc0"/><rect x="768" y="86" width="32" height="32" fill="#59bfc0"/><rect x="800" y="86" width="32" height="32" fill="#5abfc0"/><rect x="832" y="86" width="32" height="32" fill="#5abfc0"/><rect x="864" y="86" width="32" height="32" fill="#5abfc0"/><rect x="-64" y="118" width="32" height="32" fill="#5bb2e2"/><rect x="-32" y="118" width="32" height="32" fill="#5bb2e2"/><rect x="0" y="118" width="32" height="32" fill="#59b2e2"/><rect x="32" y="118" width="32" height="32" fill="#58b3e0"/><rect x="64" y="118" width="32" height="32" fill="#57b4dd"/><rect x="96" y="118" width="32" height="32" fill="#57b5da"/><rect x="128" y="118" width="32" height="32" fill="#56b7d7"/><rect x="160" y="118" width="32" height="32" fill="#54b8d5"/><rect x="192" y="118" width="32" height="32" fill="#51b9d3"/><rect x="224" y="118" width="32" height="32" fill="#4fbad2"/><rect x="256" y="118" width="32" height="32" fill="#4ebbd0"/><rect x="288" y="118" width="32" height="32" fill="#4fbccf"/><rect x="320" y="118" width="32" height="32" fill="#50bccd"/><rect x="352" y="118" width="32" height="32" fill="#51bdcc"/><rect x="384" y="118" width="32" height="32" fill="#50bdcb"/><rect x="416" y="118" width="32" height="32" fill="#4fbeca"/><rect x="448" y="118" width="32" height="32" fill="#4ebfc9"/><rect x="480" y="118" width="32" height="32" fill="#4ec0c8"/><rect x="512" y="118" width="32" height="32" fill="#50bfc5"/><rect x="544" y="118" width="32" height="32" fill="#53bfc2"/><rect x="576" y="118" width="32" height="32" fill="#55bec1"/><rect x="608" y="118" width="32" height="32" fill="#58bec0"/><rect x="640" y="118" width="32" height="32" fill="#5abebf"/><rect x="672" y="118" width="32" height="32" fill="#5bbebe"/><rect x="704" y="118" width="32" height="32" fill="#5dbebe"/><rect x="736" y="118" width="32" height="32" fill="#5ebebd"/><rect x="768" y="118" width="32" height="32" fill="#5ebebd"/><rect x="800" y="118" width="32" height="32" fill="#5fbebd"/><rect x="832" y="118" width="32" height="32" fill="#5fbebc"/><rect x="864" y="118" width="32" height="32" fill="#5fbebc"/><rect x="-64" y="150" width="32" height="32" fill="#61b1dd"/><rect x="-32" y="150" width="32" height="32" fill="#61b1dd"/><rect x="0" y="150" width="32" height="32" fill="#5fb2dd"/><rect x="32" y="150" width="32" height="32" fill="#5db3db"/><rect x="64" y="150" width="32" height="32" fill="#5cb4d9"/><rect x="96" y="150" width="32" height="32" fill="#5bb5d6"/><rect x="128" y="150" width="32" height="32" fill="#5ab6d4"/><rect x="160" y="150" width="32" height="32" fill="#58b8d1"/><rect x="192" y="150" width="32" height="32" fill="#55b9d0"/><rect x="224" y="150" width="32" height="32" fill="#53bace"/><rect x="256" y="150" width="32" height="32" fill="#52bbcd"/><rect x="288" y="150" width="32" height="32" fill="#52bccb"/><rect x="320" y="150" width="32" height="32" fill="#53bcca"/><rect x="352" y="150" width="32" height="32" fill="#54bdc9"/><rect x="384" y="150" width="32" height="32" fill="#53bec8"/><rect x="416" y="150" width="32" height="32" fill="#53bec7"/><rect x="448" y="150" width="32" height="32" fill="#52bfc5"/><rect x="480" y="150" width="32" height="32" fill="#53bfc3"/><rect x="512" y="150" width="32" height="32" fill="#55bec0"/><rect x="544" y="150" width="32" height="32" fill="#58bebe"/><rect x="576" y="150" width="32" height="32" fill="#5abdbd"/><rect x="608" y="150" width="32" height="32" fill="#5dbdbc"/><rect x="640" y="150" width="32" height="32" fill="#5fbdbb"/><rect x="672" y="150" width="32" height="32" fill="#61bdbb"/><rect x="704" y="150" width="32" height="32" fill="#62bdba"/><rect x="736" y="150" width="32" height="32" fill="#63bdba"/><rect x="768" y="150" width="32" height="32" fill="#64bdba"/><rect x="800" y="150" width="32" height="32" fill="#64bdb9"/><rect x="832" y="150" width="32" height="32" fill="#64bdb9"/><rect x="864" y="150" width="32" height="32" fill="#64bdb9"/><rect x="-64" y="182" width="32" height="32" fill="#6ab1d5"/><rect x="-32" y="182" width="32" height="32" fill="#6ab1d5"/><rect x="0" y="182" width="32" height="32" fill="#68b1d5"/><rect x="32" y="182" width="32" height="32" fill="#66b2d4"/><rect x="64" y="182" width="32" height="32" fill="#64b3d2"/><rect x="96" y="182" width="32" height="32" fill="#62b4d0"/><rect x="128" y="182" width="32" height="32" fill="#60b6ce"/><rect x="160" y="182" width="32" height="32" fill="#5eb7cc"/><rect x="192" y="182" width="32" height="32" fill="#5cb8cb"/><rect x="224" y="182" width="32" height="32" fill="#5ab9ca"/><rect x="256" y="182" width="32" height="32" fill="#59bac8"/><rect x="288" y="182" width="32" height="32" fill="#59bbc7"/><rect x="320" y="182" width="32" height="32" fill="#59bcc6"/><rect x="352" y="182" width="32" height="32" fill="#59bcc5"/><rect x="384" y="182" width="32" height="32" fill="#59bdc3"/><rect x="416" y="182" width="32" height="32" fill="#59bec2"/><rect x="448" y="182" width="32" height="32" fill="#59bec1"/><rect x="480" y="182" width="32" height="32" fill="#5abebe"/><rect x="512" y="182" width="32" height="32" fill="#5bbdbc"/><rect x="544" y="182" width="32" height="32" fill="#5ebdba"/><rect x="576" y="182" width="32" height="32" fill="#60bdb9"/><rect x="608" y="182" width="32" height="32" fill="#62bdb9"/><rect x="640" y="182" width="32" height="32" fill="#64bdb8"/><rect x="672" y="182" width="32" height="32" fill="#66bdb8"/><rect x="704" y="182" width="32" height="32" fill="#67bcb7"/><rect x="736" y="182" width="32" height="32" fill="#68bcb7"/><rect x="768" y="182" width="32" height="32" fill="#69bcb6"/><rect x="800" y="182" width="32" height="32" fill="#69bcb6"/><rect x="832" y="182" width="32" height="32" fill="#69bcb6"/><rect x="864" y="182" width="32" height="32" fill="#69bcb6"/><rect x="-64" y="214" width="32" height="32" fill="#76b0cb"/><rect x="-32" y="214" width="32" height="32" fill="#76b0cb"/><rect x="0" y="214" width="32" height="32" fill="#74b1cb"/><rect x="32" y="214" width="32" height="32" fill="#71b2cb"/><rect x="64" y="214" width="32" height="32" fill="#6eb3ca"/><rect x="96" y="214" width="32" height="32" fill="#6cb4c9"/><rect x="128" y="214" width="32" height="32" fill="#6ab5c7"/><rect x="160" y="214" width="32" height="32" fill="#68b6c6"/><rect x="192" y="214" width="32" height="32" fill="#66b7c5"/><rect x="224" y="214" width="32" height="32" fill="#64b8c4"/><rect x="256" y="214" width="32" height="32" fill="#62b9c3"/><rect x="288" y="214" width="32" height="32" fill="#61bac2"/><rect x="320" y="214" width="32" height="32" fill="#61bbc1"/><rect x="352" y="214" width="32" height="32" fill="#60bcc0"/><rect x="384" y="214" width="32" height="32" fill="#60bcbf"/><rect x="416" y="214" width="32" height="32" fill="#60bdbd"/><rect x="448" y="214" width="32" height="32" fill="#60bdbc"/><rect x="480" y="214" width="32" height="32" fill="#61bdba"/><rect x="512" y="214" width="32" height="32" fill="#63bdb8"/><rect x="544" y="214" width="32" height="32" fill="#64bcb7"/><rect x="576" y="214" width="32" height="32" fill="#67bcb6"/><rect x="608" y="214" width="32" height="32" fill="#69bcb5"/><rect x="640" y="214" width="32" height="32" fill="#6abcb5"/><rect x="672" y="214" width="32" height="32" fill="#6cbcb4"/><rect x="704" y="214" width="32" height="32" fill="#6dbcb4"/><rect x="736" y="214" width="32" height="32" fill="#6ebcb3"/><rect x="768" y="214" width="32" height="32" fill="#6ebcb3"/><rect x="800" y="214" width="32" height="32" fill="#6fbcb3"/><rect x="832" y="214" width="32" height="32" fill="#6fbcb3"/><rect x="864" y="214" width="32" height="32" fill="#6fbcb3"/><rect x="-64" y="246" width="32" height="32" fill="#83afc0"/><rect x="-32" y="246" width="32" height="32" fill="#83afc0"/><rect x="0" y="246" width="32" height="32" fill="#81b0c0"/><rect x="32" y="246" width="32" height="32" fill="#7db1c1"/><rect x="64" y="246" width="32" height="32" fill="#7bb2c0"/><rect x="96" y="246" width="32" height="32" fill="#78b3c0"/><rect x="128" y="246" width="32" height="32" fill="#76b4bf"/><rect x="160" y="246" width="32" height="32" fill="#73b5be"/><rect x="192" y="246" width="32" height="32" fill="#71b6be"/><rect x="224" y="246" width="32" height="32" fill="#6fb7bd"/><rect x="256" y="246" width="32" height="32" fill="#6db8bd"/><rect x="288" y="246" width="32" height="32" fill="#6bb9bc"/><rect x="320" y="246" width="32" height="32" fill="#6ababb"/><rect x="352" y="246" width="32" height="32" fill="#69bbba"/><rect x="384" y="246" width="32" height="32" fill="#69bbb9"/><rect x="416" y="246" width="32" height="32" fill="#68bcb8"/><rect x="448" y="246" width="32" height="32" fill="#69bcb7"/><rect x="480" y="246" width="32" height="32" fill="#69bcb6"/><rect x="512" y="246" width="32" height="32" fill="#6abcb5"/><rect x="544" y="246" width="32" height="32" fill="#6cbcb4"/><rect x="576" y="246" width="32" height="32" fill="#6dbcb3"/><rect x="608" y="246" width="32" height="32" fill="#6fbbb2"/><rect x="640" y="246" width="32" height="32" fill="#70bbb1"/><rect x="672" y="246" width="32" height="32" fill="#72bbb1"/><rect x="704" y="246" width="32" height="32" fill="#72bbb1"/><rect x="736" y="246" width="32" height="32" fill="#73bbb0"/><rect x="768" y="246" width="32" height="32" fill="#73bbb0"/><rect x="800" y="246" width="32" height="32" fill="#74bbb0"/><rect x="832" y="246" width="32" height="32" fill="#74bbb0"/><rect x="864" y="246" width="32" height="32" fill="#74bbb0"/><rect x="-64" y="278" width="32" height="32" fill="#91afb4"/><rect x="-32" y="278" width="32" height="32" fill="#91afb4"/><rect x="0" y="278" width="32" height="32" fill="#8fafb5"/><rect x="32" y="278" width="32" height="32" fill="#8bb0b5"/><rect x="64" y="278" width="32" height="32" fill="#88b1b6"/><rect x="96" y="278" width="32" height="32" fill="#85b2b6"/><rect x="128" y="278" width="32" height="32" fill="#82b3b6"/><rect x="160" y="278" width="32" height="32" fill="#80b4b6"/><rect x="192" y="278" width="32" height="32" fill="#7db5b6"/><rect x="224" y="278" width="32" height="32" fill="#7bb6b6"/><rect x="256" y="278" width="32" height="32" fill="#79b7b6"/><rect x="288" y="278" width="32" height="32" fill="#76b8b5"/><rect x="320" y="278" width="32" height="32" fill="#75b9b5"/><rect x="352" y="278" width="32" height="32" fill="#73bab4"/><rect x="384" y="278" width="32" height="32" fill="#72bab4"/><rect x="416" y="278" width="32" height="32" fill="#72bbb3"/><rect x="448" y="278" width="32" height="32" fill="#71bbb2"/><rect x="480" y="278" width="32" height="32" fill="#72bbb2"/><rect x="512" y="278" width="32" height="32" fill="#72bbb1"/><rect x="544" y="278" width="32" height="32" fill="#73bbb0"/><rect x="576" y="278" width="32" height="32" fill="#74bbaf"/><rect x="608" y="278" width="32" height="32" fill="#75bbae"/><rect x="640" y="278" width="32" height="32" fill="#77bbae"/><rect x="672" y="278" width="32" height="32" fill="#77baae"/><rect x="704" y="278" width="32" height="32" fill="#78baad"/><rect x="736" y="278" width="32" height="32" fill="#78bbad"/><rect x="768" y="278" width="32" height="32" fill="#79bbad"/><rect x="800" y="278" width="32" height="32" fill="#79bbad"/><rect x="832" y="278" width="32" height="32" fill="#79bbad"/><rect x="864" y="278" width="32" height="32" fill="#79bbad"/><rect x="-64" y="310" width="32" height="32" fill="#9faea9"/><rect x="-32" y="310" width="32" height="32" fill="#9faea9"/><rect x="0" y="310" width="32" height="32" fill="#9daea9"/><rect x="32" y="310" width="32" height="32" fill="#9aafaa"/><rect x="64" y="310" width="32" height="32" fill="#96b0ab"/><rect x="96" y="310" width="32" height="32" fill="#93b1ab"/><rect x="128" y="310" width="32" height="32" fill="#90b2ac"/><rect x="160" y="310" width="32" height="32" fill="#8db3ad"/><rect x="192" y="310" width="32" height="32" fill="#8ab4ad"/><rect x="224" y="310" width="32" height="32" fill="#87b4ae"/><rect x="256" y="310" width="32" height="32" fill="#85b5ae"/><rect x="288" y="310" width="32" height="32" fill="#82b7ae"/><rect x="320" y="310" width="32" height="32" fill="#80b8ae"/><rect x="352" y="310" width="32" height="32" fill="#7eb9ae"/><rect x="384" y="310" width="32" height="32" fill="#7cb9ae"/><rect x="416" y="310" width="32" height="32" fill="#7bbaae"/><rect x="448" y="310" width="32" height="32" fill="#7abaad"/><rect x="480" y="310" width="32" height="32" fill="#7abaad"/><rect x="512" y="310" width="32" height="32" fill="#7bbaac"/><rect x="544" y="310" width="32" height="32" fill="#7bbaac"/><rect x="576" y="310" width="32" height="32" fill="#7bbaab"/><rect x="608" y="310" width="32" height="32" fill="#7cbaab"/><rect x="640" y="310" width="32" height="32" fill="#7dbaaa"/><rect x="672" y="310" width="32" height="32" fill="#7dbaaa"/><rect x="704" y="310" width="32" height="32" fill="#7ebaaa"/><rect x="736" y="310" width="32" height="32" fill="#7ebaaa"/><rect x="768" y="310" width="32" height="32" fill="#7ebaaa"/><rect x="800" y="310" width="32" height="32" fill="#7ebbaa"/><rect x="832" y="310" width="32" height="32" fill="#7dbbaa"/><rect x="864" y="310" width="32" height="32" fill="#7dbbaa"/><rect x="-64" y="342" width="32" height="32" fill="#adad9c"/><rect x="-32" y="342" width="32" height="32" fill="#adad9c"/><rect x="0" y="342" width="32" height="32" fill="#acae9d"/><rect x="32" y="342" width="32" height="32" fill="#a8af9e"/><rect x="64" y="342" width="32" height="32" fill="#a5b09f"/><rect x="96" y="342" width="32" height="32" fill="#a1b0a1"/><rect x="128" y="342" width="32" height="32" fill="#9db1a2"/><rect x="160" y="342" width="32" height="32" fill="#9ab2a4"/><rect x="192" y="342" width="32" height="32" fill="#97b3a5"/><rect x="224" y="342" width="32" height="32" fill="#94b4a6"/><rect x="256" y="342" width="32" height="32" fill="#90b5a7"/><rect x="288" y="342" width="32" height="32" fill="#8db6a7"/><rect x="320" y="342" width="32" height="32" fill="#8ab7a8"/><rect x="352" y="342" width="32" height="32" fill="#88b8a8"/><rect x="384" y="342" width="32" height="32" fill="#86b8a8"/><rect x="416" y="342" width="32" height="32" fill="#84b9a8"/><rect x="448" y="342" width="32" height="32" fill="#83b9a8"/><rect x="480" y="342" width="32" height="32" fill="#83b9a8"/><rect x="512" y="342" width="32" height="32" fill="#83b9a7"/><rect x="544" y="342" width="32" height="32" fill="#82b9a7"/><rect x="576" y="342" width="32" height="32" fill="#83b9a7"/><rect x="608" y="342" width="32" height="32" fill="#83b9a7"/><rect x="640" y="342" width="32" height="32" fill="#83b9a7"/><rect x="672" y="342" width="32" height="32" fill="#83b9a7"/><rect x="704" y="342" width="32" height="32" fill="#83b9a7"/><rect x="736" y="342" width="32" height="32" fill="#83b9a7"/><rect x="768" y="342" width="32" height="32" fill="#83baa7"/><rect x="800" y="342" width="32" height="32" fill="#83baa7"/><rect x="832" y="342" width="32" height="32" fill="#82baa7"/><rect x="864" y="342" width="32" height="32" fill="#82baa7"/><rect x="-64" y="374" width="32" height="32" fill="#bcad91"/><rect x="-32" y="374" width="32" height="32" fill="#bcad91"/><rect x="0" y="374" width="32" height="32" fill="#baad91"/><rect x="32" y="374" width="32" height="32" fill="#b6ae93"/><rect x="64" y="374" width="32" height="32" fill="#b2af94"/><rect x="96" y="374" width="32" height="32" fill="#aeb096"/><rect x="128" y="374" width="32" height="32" fill="#aab198"/><rect x="160" y="374" width="32" height="32" fill="#a6b29a"/><rect x="192" y="374" width="32" height="32" fill="#a3b29c"/><rect x="224" y="374" width="32" height="32" fill="#9fb39e"/><rect x="256" y="374" width="32" height="32" fill="#9cb49f"/><rect x="288" y="374" width="32" height="32" fill="#98b5a0"/><rect x="320" y="374" width="32" height="32" fill="#95b6a1"/><rect x="352" y="374" width="32" height="32" fill="#92b7a1"/><rect x="384" y="374" width="32" height="32" fill="#90b7a2"/><rect x="416" y="374" width="32" height="32" fill="#8eb8a2"/><rect x="448" y="374" width="32" height="32" fill="#8cb8a2"/><rect x="480" y="374" width="32" height="32" fill="#8bb8a2"/><rect x="512" y="374" width="32" height="32" fill="#8ab8a2"/><rect x="544" y="374" width="32" height="32" fill="#8ab8a2"/><rect x="576" y="374" width="32" height="32" fill="#8ab8a3"/><rect x="608" y="374" width="32" height="32" fill="#89b8a3"/><rect x="640" y="374" width="32" height="32" fill="#89b8a3"/><rect x="672" y="374" width="32" height="32" fill="#89b8a3"/><rect x="704" y="374" width="32" height="32" fill="#89b8a3"/><rect x="736" y="374" width="32" height="32" fill="#88b9a4"/><rect x="768" y="374" width="32" height="32" fill="#88b9a4"/><rect x="800" y="374" width="32" height="32" fill="#87b9a4"/><rect x="832" y="374" width="32" height="32" fill="#87baa4"/><rect x="864" y="374" width="32" height="32" fill="#87baa4"/><rect x="-64" y="406" width="32" height="32" fill="#c9ac85"/><rect x="-32" y="406" width="32" height="32" fill="#c9ac85"/><rect x="0" y="406" width="32" height="32" fill="#c8ac86"/><rect x="32" y="406" width="32" height="32" fill="#c4ad87"/><rect x="64" y="406" width="32" height="32" fill="#c0ae8a"/><rect x="96" y="406" width="32" height="32" fill="#bbaf8c"/><rect x="128" y="406" width="32" height="32" fill="#b7b08f"/><rect x="160" y="406" width="32" height="32" fill="#b2b191"/><rect x="192" y="406" width="32" height="32" fill="#aeb294"/><rect x="224" y="406" width="32" height="32" fill="#aab396"/><rect x="256" y="406" width="32" height="32" fill="#a6b498"/><rect x="288" y="406" width="32" height="32" fill="#a2b599"/><rect x="320" y="406" width="32" height="32" fill="#9fb69a"/><rect x="352" y="406" width="32" height="32" fill="#9cb69b"/><rect x="384" y="406" width="32" height="32" fill="#99b79c"/><rect x="416" y="406" width="32" height="32" fill="#97b79c"/><rect x="448" y="406" width="32" height="32" fill="#95b79c"/><rect x="480" y="406" width="32" height="32" fill="#94b79d"/><rect x="512" y="406" width="32" height="32" fill="#92b79d"/><rect x="544" y="406" width="32" height="32" fill="#91b79e"/><rect x="576" y="406" width="32" height="32" fill="#91b79e"/><rect x="608" y="406" width="32" height="32" fill="#90b79f"/><rect x="640" y="406" width="32" height="32" fill="#8fb79f"/><rect x="672" y="406" width="32" height="32" fill="#8fb7a0"/><rect x="704" y="406" width="32" height="32" fill="#8eb7a0"/><rect x="736" y="406" width="32" height="32" fill="#8eb8a1"/><rect x="768" y="406" width="32" height="32" fill="#8db8a1"/><rect x="800" y="406" width="32" height="32" fill="#8cb8a1"/><rect x="832" y="406" width="32" height="32" fill="#8cb9a2"/><rect x="864" y="406" width="32" height="32" fill="#8cb9a2"/><rect x="-64" y="438" width="32" height="32" fill="#d6ab7a"/><rect x="-32" y="438" width="32" height="32" fill="#d6ab7a"/><rect x="0" y="438" width="32" height="32" fill="#d5ac7b"/><rect x="32" y="438" width="32" height="32" fill="#d1ad7d"/><rect x="64" y="438" width="32" height="32" fill="#ccae80"/><rect x="96" y="438" width="32" height="32" fill="#c7af83"/><rect x="128" y="438" width="32" height="32" fill="#c2b086"/><rect x="160" y="438" width="32" height="32" fill="#bdb189"/><rect x="192" y="438" width="32" height="32" fill="#b8b28c"/><rect x="224" y="438" width="32" height="32" fill="#b4b38f"/><rect x="256" y="438" width="32" height="32" fill="#afb491"/><rect x="288" y="438" width="32" height="32" fill="#abb593"/><rect x="320" y="438" width="32" height="32" fill="#a8b594"/><rect x="352" y="438" width="32" height="32" fill="#a5b695"/><rect x="384" y="438" width="32" height="32" fill="#a2b696"/><rect x="416" y="438" width="32" height="32" fill="#a0b696"/><rect x="448" y="438" width="32" height="32" fill="#9db797"/><rect x="480" y="438" width="32" height="32" fill="#9cb797"/><rect x="512" y="438" width="32" height="32" fill="#9ab798"/><rect x="544" y="438" width="32" height="32" fill="#99b799"/><rect x="576" y="438" width="32" height="32" fill="#97b69a"/><rect x="608" y="438" width="32" height="32" fill="#96b69b"/><rect x="640" y="438" width="32" height="32" fill="#95b69c"/><rect x="672" y="438" width="32" height="32" fill="#95b69c"/><rect x="704" y="438" width="32" height="32" fill="#94b79d"/><rect x="736" y="438" width="32" height="32" fill="#93b79d"/><rect x="768" y="438" width="32" height="32" fill="#92b79e"/><rect x="800" y="438" width="32" height="32" fill="#91b89f"/><rect x="832" y="438" width="32" height="32" fill="#91b89f"/><rect x="864" y="438" width="32" height="32" fill="#91b89f"/><rect x="-64" y="470" width="32" height="32" fill="#e2ab70"/><rect x="-32" y="470" width="32" height="32" fill="#e2ab70"/><rect x="0" y="470" width="32" height="32" fill="#e0ab71"/><rect x="32" y="470" width="32" height="32" fill="#dcac73"/><rect x="64" y="470" width="32" height="32" fill="#d7ad76"/><rect x="96" y="470" width="32" height="32" fill="#d2af7a"/><rect x="128" y="470" width="32" height="32" fill="#ccb07e"/><rect x="160" y="470" width="32" height="32" fill="#c7b182"/><rect x="192" y="470" width="32" height="32" fill="#c1b285"/><rect x="224" y="470" width="32" height="32" fill="#bcb388"/><rect x="256" y="470" width="32" height="32" fill="#b8b48b"/><rect x="288" y="470" width="32" height="32" fill="#b4b58d"/><rect x="320" y="470" width="32" height="32" fill="#b0b58e"/><rect x="352" y="470" width="32" height="32" fill="#adb68f"/><rect x="384" y="470" width="32" height="32" fill="#aab690"/><rect x="416" y="470" width="32" height="32" fill="#a8b691"/><rect x="448" y="470" width="32" height="32" fill="#a5b692"/><rect x="480" y="470" width="32" height="32" fill="#a3b693"/><rect x="512" y="470" width="32" height="32" fill="#a2b693"/><rect x="544" y="470" width="32" height="32" fill="#a0b694"/><rect x="576" y="470" width="32" height="32" fill="#9eb696"/><rect x="608" y="470" width="32" height="32" fill="#9db697"/><rect x="640" y="470" width="32" height="32" fill="#9bb698"/><rect x="672" y="470" width="32" height="32" fill="#9ab699"/><rect x="704" y="470" width="32" height="32" fill="#99b69a"/><rect x="736" y="470" width="32" height="32" fill="#98b69b"/><rect x="768" y="470" width="32" height="32" fill="#97b69b"/><rect x="800" y="470" width="32" height="32" fill="#96b79c"/><rect x="832" y="470" width="32" height="32" fill="#96b79c"/><rect x="864" y="470" width="32" height="32" fill="#96b79c"/><rect x="-64" y="502" width="32" height="32" fill="#ecaa67"/><rect x="-32" y="502" width="32" height="32" fill="#ecaa67"/><rect x="0" y="502" width="32" height="32" fill="#ebab68"/><rect x="32" y="502" width="32" height="32" fill="#e7ac6a"/><rect x="64" y="502" width="32" height="32" fill="#e1ad6e"/><rect x="96" y="502" width="32" height="32" fill="#dbae73"/><rect x="128" y="502" width="32" height="32" fill="#d5b077"/><rect x="160" y="502" width="32" height="32" fill="#cfb17b"/><rect x="192" y="502" width="32" height="32" fill="#c9b27f"/><rect x="224" y="502" width="32" height="32" fill="#c4b482"/><rect x="256" y="502" width="32" height="32" fill="#c0b485"/><rect x="288" y="502" width="32" height="32" fill="#bcb587"/><rect x="320" y="502" width="32" height="32" fill="#b8b589"/><rect x="352" y="502" width="32" height="32" fill="#b5b58a"/><rect x="384" y="502" width="32" height="32" fill="#b2b58c"/><rect x="416" y="502" width="32" height="32" fill="#afb58c"/><rect x="448" y="502" width="32" height="32" fill="#adb68d"/><rect x="480" y="502" width="32" height="32" fill="#abb68e"/><rect x="512" y="502" width="32" height="32" fill="#a9b68f"/><rect x="544" y="502" width="32" height="32" fill="#a7b690"/><rect x="576" y="502" width="32" height="32" fill="#a5b692"/><rect x="608" y="502" width="32" height="32" fill="#a3b693"/><rect x="640" y="502" width="32" height="32" fill="#a1b694"/><rect x="672" y="502" width="32" height="32" fill="#a0b695"/><rect x="704" y="502" width="32" height="32" fill="#9eb697"/><rect x="736" y="502" width="32" height="32" fill="#9db698"/><rect x="768" y="502" width="32" height="32" fill="#9cb699"/><rect x="800" y="502" width="32" height="32" fill="#9bb69a"/><rect x="832" y="502" width="32" height="32" fill="#9ab69a"/><rect x="864" y="502" width="32" height="32" fill="#9ab69a"/><rect x="-64" y="534" width="32" height="32" fill="#f5aa60"/><rect x="-32" y="534" width="32" height="32" fill="#f5aa60"/><rect x="0" y="534" width="32" height="32" fill="#f4aa61"/><rect x="32" y="534" width="32" height="32" fill="#efab64"/><rect x="64" y="534" width="32" height="32" fill="#e9ad68"/><rect x="96" y="534" width="32" height="32" fill="#e2ae6d"/><rect x="128" y="534" width="32" height="32" fill="#dcaf72"/><rect x="160" y="534" width="32" height="32" fill="#d6b176"/><rect x="192" y="534" width="32" height="32" fill="#d0b27a"/><rect x="224" y="534" width="32" height="32" fill="#cbb47e"/><rect x="256" y="534" width="32" height="32" fill="#c6b480"/><rect x="288" y="534" width="32" height="32" fill="#c2b583"/><rect x="320" y="534" width="32" height="32" fill="#bfb584"/><rect x="352" y="534" width="32" height="32" fill="#bcb586"/><rect x="384" y="534" width="32" height="32" fill="#b9b587"/><rect x="416" y="534" width="32" height="32" fill="#b6b588"/><rect x="448" y="534" width="32" height="32" fill="#b4b589"/><rect x="480" y="534" width="32" height="32" fill="#b1b68a"/><rect x="512" y="534" width="32" height="32" fill="#afb68c"/><rect x="544" y="534" width="32" height="32" fill="#adb68d"/><rect x="576" y="534" width="32" height="32" fill="#aab68e"/><rect x="608" y="534" width="32" height="32" fill="#a8b68f"/><rect x="640" y="534" width="32" height="32" fill="#a7b691"/><rect x="672" y="534" width="32" height="32" fill="#a5b692"/><rect x="704" y="534" width="32" height="32" fill="#a3b694"/><rect x="736" y="534" width="32" height="32" fill="#a2b695"/><rect x="768" y="534" width="32" height="32" fill="#a1b696"/><rect x="800" y="534" width="32" height="32" fill="#9fb697"/><rect x="832" y="534" width="32" height="32" fill="#9fb698"/><rect x="864" y="534" width="32" height="32" fill="#9fb698"/><rect x="-64" y="566" width="32" height="32" fill="#faaa5b"/><rect x="-32" y="566" width="32" height="32" fill="#faaa5b"/><rect x="0" y="566" width="32" height="32" fill="#f9aa5c"/><rect x="32" y="566" width="32" height="32" fill="#f4ab60"/><rect x="64" y="566" width="32" height="32" fill="#eeac64"/><rect x="96" y="566" width="32" height="32" fill="#e7ae69"/><rect x="128" y="566" width="32" height="32" fill="#e1af6e"/><rect x="160" y="566" width="32" height="32" fill="#dbb172"/><rect x="192" y="566" width="32" height="32" fill="#d6b276"/><rect x="224" y="566" width="32" height="32" fill="#d0b37a"/><rect x="256" y="566" width="32" height="32" fill="#ccb47d"/><rect x="288" y="566" width="32" height="32" fill="#c8b47f"/><rect x="320" y="566" width="32" height="32" fill="#c5b481"/><rect x="352" y="566" width="32" height="32" fill="#c2b482"/><rect x="384" y="566" width="32" height="32" fill="#bfb483"/><rect x="416" y="566" width="32" height="32" fill="#bcb485"/><rect x="448" y="566" width="32" height="32" fill="#bab586"/><rect x="480" y="566" width="32" height="32" fill="#b7b587"/><rect x="512" y="566" width="32" height="32" fill="#b5b689"/><rect x="544" y="566" width="32" height="32" fill="#b2b68a"/><rect x="576" y="566" width="32" height="32" fill="#b0b68b"/><rect x="608" y="566" width="32" height="32" fill="#aeb68c"/><rect x="640" y="566" width="32" height="32" fill="#acb68e"/><rect x="672" y="566" width="32" height="32" fill="#aab68f"/><rect x="704" y="566" width="32" height="32" fill="#a8b691"/><rect x="736" y="566" width="32" height="32" fill="#a7b692"/><rect x="768" y="566" width="32" height="32" fill="#a5b694"/><rect x="800" y="566" width="32" height="32" fill="#a4b695"/><rect x="832" y="566" width="32" height="32" fill="#a3b696"/><rect x="864" y="566" width="32" height="32" fill="#a3b696"/><rect x="-64" y="598" width="32" height="32" fill="#fcaa5a"/><rect x="-32" y="598" width="32" height="32" fill="#fcaa5a"/><rect x="0" y="598" width="32" height="32" fill="#fbaa5b"/><rect x="32" y="598" width="32" height="32" fill="#f6ab5e"/><rect x="64" y="598" width="32" height="32" fill="#f1ac62"/><rect x="96" y="598" width="32" height="32" fill="#ebad67"/><rect x="128" y="598" width="32" height="32" fill="#e5af6b"/><rect x="160" y="598" width="32" height="32" fill="#dfb06f"/><rect x="192" y="598" width="32" height="32" fill="#dab173"/><rect x="224" y="598" width="32" height="32" fill="#d5b377"/><rect x="256" y="598" width="32" height="32" fill="#d1b379"/><rect x="288" y="598" width="32" height="32" fill="#cdb37c"/><rect x="320" y="598" width="32" height="32" fill="#cab37d"/><rect x="352" y="598" width="32" height="32" fill="#c7b37f"/><rect x="384" y="598" width="32" height="32" fill="#c5b380"/><rect x="416" y="598" width="32" height="32" fill="#c2b482"/><rect x="448" y="598" width="32" height="32" fill="#bfb484"/><rect x="480" y="598" width="32" height="32" fill="#bcb585"/><rect x="512" y="598" width="32" height="32" fill="#b9b587"/><rect x="544" y="598" width="32" height="32" fill="#b7b688"/><rect x="576" y="598" width="32" height="32" fill="#b4b689"/><rect x="608" y="598" width="32" height="32" fill="#b2b68a"/><rect x="640" y="598" width="32" height="32" fill="#b0b68b"/><rect x="672" y="598" width="32" height="32" fill="#aeb68c"/><rect x="704" y="598" width="32" height="32" fill="#acb68e"/><rect x="736" y="598" width="32" height="32" fill="#abb690"/><rect x="768" y="598" width="32" height="32" fill="#a9b692"/><rect x="800" y="598" width="32" height="32" fill="#a8b693"/><rect x="832" y="598" width="32" height="32" fill="#a7b693"/><rect x="864" y="598" width="32" height="32" fill="#a7b693"/><rect x="-64" y="630" width="32" height="32" fill="#fcaa5b"/><rect x="-32" y="630" width="32" height="32" fill="#fcaa5b"/><rect x="0" y="630" width="32" height="32" fill="#faaa5c"/><rect x="32" y="630" width="32" height="32" fill="#f6ab5e"/><rect x="64" y="630" width="32" height="32" fill="#f2ac62"/><rect x="96" y="630" width="32" height="32" fill="#edad66"/><rect x="128" y="630" width="32" height="32" fill="#e7ae69"/><rect x="160" y="630" width="32" height="32" fill="#e2af6d"/><rect x="192" y="630" width="32" height="32" fill="#ddb171"/><rect x="224" y="630" width="32" height="32" fill="#d9b174"/><rect x="256" y="630" width="32" height="32" fill="#d5b277"/><rect x="288" y="630" width="32" height="32" fill="#d2b279"/><rect x="320" y="630" width="32" height="32" fill="#cfb37b"/><rect x="352" y="630" width="32" height="32" fill="#ccb37c"/><rect x="384" y="630" width="32" height="32" fill="#c9b37e"/><rect x="416" y="630" width="32" height="32" fill="#c6b380"/><rect x="448" y="630" width="32" height="32" fill="#c3b482"/><rect x="480" y="630" width="32" height="32" fill="#c0b583"/><rect x="512" y="630" width="32" height="32" fill="#bdb585"/><rect x="544" y="630" width="32" height="32" fill="#bbb686"/><rect x="576" y="630" width="32" height="32" fill="#b8b687"/><rect x="608" y="630" width="32" height="32" fill="#b6b688"/><rect x="640" y="630" width="32" height="32" fill="#b4b689"/><rect x="672" y="630" width="32" height="32" fill="#b2b68a"/><rect x="704" y="630" width="32" height="32" fill="#b0b68c"/><rect x="736" y="630" width="32" height="32" fill="#afb68d"/><rect x="768" y="630" width="32" height="32" fill="#adb68f"/><rect x="800" y="630" width="32" height="32" fill="#abb690"/><rect x="832" y="630" width="32" height="32" fill="#abb691"/><rect x="864" y="630" width="32" height="32" fill="#abb691"/><rect x="-64" y="662" width="32" height="32" fill="#fbaa5c"/><rect x="-32" y="662" width="32" height="32" fill="#fbaa5c"/><rect x="0" y="662" width="32" height="32" fill="#faab5d"/><rect x="32" y="662" width="32" height="32" fill="#f6ab5f"/><rect x="64" y="662" width="32" height="32" fill="#f2ac62"/><rect x="96" y="662" width="32" height="32" fill="#eead65"/><rect x="128" y="662" width="32" height="32" fill="#e9ae69"/><rect x="160" y="662" width="32" height="32" fill="#e5af6c"/><rect x="192" y="662" width="32" height="32" fill="#e0b06f"/><rect x="224" y="662" width="32" height="32" fill="#dcb072"/><rect x="256" y="662" width="32" height="32" fill="#d8b175"/><rect x="288" y="662" width="32" height="32" fill="#d5b177"/><rect x="320" y="662" width="32" height="32" fill="#d2b279"/><rect x="352" y="662" width="32" height="32" fill="#d0b27a"/><rect x="384" y="662" width="32" height="32" fill="#cdb27c"/><rect x="416" y="662" width="32" height="32" fill="#cab37e"/><rect x="448" y="662" width="32" height="32" fill="#c7b480"/><rect x="480" y="662" width="32" height="32" fill="#c4b482"/><rect x="512" y="662" width="32" height="32" fill="#c1b584"/><rect x="544" y="662" width="32" height="32" fill="#beb585"/><rect x="576" y="662" width="32" height="32" fill="#bcb686"/><rect x="608" y="662" width="32" height="32" fill="#bab687"/><rect x="640" y="662" width="32" height="32" fill="#b8b687"/><rect x="672" y="662" width="32" height="32" fill="#b6b688"/><rect x="704" y="662" width="32" height="32" fill="#b4b689"/><rect x="736" y="662" width="32" height="32" fill="#b2b68b"/><rect x="768" y="662" width="32" height="32" fill="#b0b68c"/><rect x="800" y="662" width="32" height="32" fill="#afb68d"/><rect x="832" y="662" width="32" height="32" fill="#aeb68d"/><rect x="864" y="662" width="32" height="32" fill="#aeb68d"/><rect x="-64" y="694" width="32" height="32" fill="#faab5d"/><rect x="-32" y="694" width="32" height="32" fill="#faab5d"/><rect x="0" y="694" width="32" height="32" fill="#f9ab5e"/><rect x="32" y="694" width="32" height="32" fill="#f6ac60"/><rect x="64" y="694" width="32" height="32" fill="#f2ac62"/><rect x="96" y="694" width="32" height="32" fill="#efad65"/><rect x="128" y="694" width="32" height="32" fill="#ebad68"/><rect x="160" y="694" width="32" height="32" fill="#e7ae6b"/><rect x="192" y="694" width="32" height="32" fill="#e3af6e"/><rect x="224" y="694" width="32" height="32" fill="#dfb071"/><rect x="256" y="694" width="32" height="32" fill="#dcb073"/><rect x="288" y="694" width="32" height="32" fill="#d9b175"/><rect x="320" y="694" width="32" height="32" fill="#d6b177"/><rect x="352" y="694" width="32" height="32" fill="#d3b279"/><rect x="384" y="694" width="32" height="32" fill="#d0b27b"/><rect x="416" y="694" width="32" height="32" fill="#cdb37d"/><rect x="448" y="694" width="32" height="32" fill="#cab37f"/><rect x="480" y="694" width="32" height="32" fill="#c7b481"/><rect x="512" y="694" width="32" height="32" fill="#c5b583"/><rect x="544" y="694" width="32" height="32" fill="#c2b584"/><rect x="576" y="694" width="32" height="32" fill="#c0b585"/><rect x="608" y="694" width="32" height="32" fill="#beb685"/><rect x="640" y="694" width="32" height="32" fill="#bcb686"/><rect x="672" y="694" width="32" height="32" fill="#bab686"/><rect x="704" y="694" width="32" height="32" fill="#b8b687"/><rect x="736" y="694" width="32" height="32" fill="#b6b688"/><rect x="768" y="694" width="32" height="32" fill="#b4b689"/><rect x="800" y="694" width="32" height="32" fill="#b2b68a"/><rect x="832" y="694" width="32" height="32" fill="#b1b68a"/><rect x="864" y="694" width="32" height="32" fill="#b1b68a"/><rect x="-64" y="726" width="32" height="32" fill="#faab5d"/><rect x="-32" y="726" width="32" height="32" fill="#faab5d"/><rect x="0" y="726" width="32" height="32" fill="#f9ab5e"/><rect x="32" y="726" width="32" height="32" fill="#f6ac60"/><rect x="64" y="726" width="32" height="32" fill="#f2ac62"/><rect x="96" y="726" width="32" height="32" fill="#efad65"/><rect x="128" y="726" width="32" height="32" fill="#ebad68"/><rect x="160" y="726" width="32" height="32" fill="#e7ae6b"/><rect x="192" y="726" width="32" height="32" fill="#e4af6d"/><rect x="224" y="726" width="32" height="32" fill="#e0af70"/><rect x="256" y="726" width="32" height="32" fill="#dcb073"/><rect x="288" y="726" width="32" height="32" fill="#dab175"/><rect x="320" y="726" width="32" height="32" fill="#d7b176"/><rect x="352" y="726" width="32" height="32" fill="#d4b178"/><rect x="384" y="726" width="32" height="32" fill="#d1b27a"/><rect x="416" y="726" width="32" height="32" fill="#ceb27c"/><rect x="448" y="726" width="32" height="32" fill="#ccb37e"/><rect x="480" y="726" width="32" height="32" fill="#c9b480"/><rect x="512" y="726" width="32" height="32" fill="#c6b482"/><rect x="544" y="726" width="32" height="32" fill="#c3b583"/><rect x="576" y="726" width="32" height="32" fill="#c1b584"/><rect x="608" y="726" width="32" height="32" fill="#bfb685"/><rect x="640" y="726" width="32" height="32" fill="#bdb685"/><rect x="672" y="726" width="32" height="32" fill="#bbb686"/><rect x="704" y="726" width="32" height="32" fill="#b9b687"/><rect x="736" y="726" width="32" height="32" fill="#b7b687"/><rect x="768" y="726" width="32" height="32" fill="#b5b688"/><rect x="800" y="726" width="32" height="32" fill="#b3b689"/><rect x="832" y="726" width="32" height="32" fill="#b2b68a"/><rect x="864" y="726" width="32" height="32" fill="#b2b68a"/><rect x="-64" y="758" width="32" height="32" fill="#faab5d"/><rect x="-32" y="758" width="32" height="32" fill="#faab5d"/><rect x="0" y="758" width="32" height="32" fill="#f9ab5e"/><rect x="32" y="758" width="32" height="32" fill="#f6ac60"/><rect x="64" y="758" width="32" height="32" fill="#f2ac62"/><rect x="96" y="758" width="32" height="32" fill="#efad65"/><rect x="128" y="758" width="32" height="32" fill="#ebad68"/><rect x="160" y="758" width="32" height="32" fill="#e7ae6b"/><rect x="192" y="758" width="32" height="32" fill="#e4af6d"/><rect x="224" y="758" width="32" height="32" fill="#e0af70"/><rect x="256" y="758" width="32" height="32" fill="#dcb073"/><rect x="288" y="758" width="32" height="32" fill="#dab175"/><rect x="320" y="758" width="32" height="32" fill="#d7b176"/><rect x="352" y="758" width="32" height="32" fill="#d4b178"/><rect x="384" y="758" width="32" height="32" fill="#d1b27a"/><rect x="416" y="758" width="32" height="32" fill="#ceb27c"/><rect x="448" y="758" width="32" height="32" fill="#ccb37e"/><rect x="480" y="758" width="32" height="32" fill="#c9b480"/><rect x="512" y="758" width="32" height="32" fill="#c6b482"/><rect x="544" y="758" width="32" height="32" fill="#c3b583"/><rect x="576" y="758" width="32" height="32" fill="#c1b584"/><rect x="608" y="758" width="32" height="32" fill="#bfb685"/><rect x="640" y="758" width="32" height="32" fill="#bdb685"/><rect x="672" y="758" width="32" height="32" fill="#bbb686"/><rect x="704" y="758" width="32" height="32" fill="#b9b687"/><rect x="736" y="758" width="32" height="32" fill="#b7b687"/><rect x="768" y="758" width="32" height="32" fill="#b5b688"/><rect x="800" y="758" width="32" height="32" fill="#b3b689"/><rect x="832" y="758" width="32" height="32" fill="#b2b68a"/><rect x="864" y="758" width="32" height="32" fill="#b2b68a"/></g></svg></div>

<div class="abs" style="left:0;top:21px;width:1280px;height:1px;background:rgba(0,0,0,.33)"></div>
<div id="topbar" class="abs">
  <div class="t" style="left:12px;top:6px;font-size:10.2px;transform:scaleX(.91);transform-origin:0 0">Activities</div>
  <svg class="abs" style="left:78px;top:5px" width="11" height="12" viewBox="0 0 11 12"><rect x="0.75" y="0.85" width="7.6" height="8.6" rx="1.6" fill="none" stroke="#eee" stroke-width="1.3"/><path d="M2.3 4.8 A2.3 2.3 0 1 1 4.6 7.1 H2.3 Z" fill="#eee"/><circle cx="4.6" cy="4.8" r=".85" fill="#222"/><path d="M9.9 3.2 V9.3 Q9.9 10.4 8.8 10.4 H2.8" fill="none" stroke="#eee" stroke-width="1.3"/></svg>
  <div class="t" style="left:93px;top:5.8px;font-size:10px;transform:scaleX(.9);transform-origin:0 0">Disks</div>
  <div class="t" style="left:610px;top:6.2px;font-size:10.2px;transform:scaleX(.92);transform-origin:0 0">Jun 19&nbsp; 13:29</div>
  <!-- network -->
  <svg class="abs" style="left:1220.5px;top:5.3px" width="11" height="11" viewBox="0 0 11 11"><rect x="3.6" y="0" width="3.8" height="3.3" fill="#eee"/><rect x="4.85" y="3" width="1.3" height="2.6" fill="#eee"/><rect x="1.55" y="5.3" width="7.9" height="1.3" fill="#eee"/><rect x="1.55" y="5.3" width="1.3" height="2.5" fill="#eee"/><rect x="8.15" y="5.3" width="1.3" height="2.5" fill="#eee"/><rect x="0" y="7.5" width="4.4" height="3.2" fill="#eee"/><rect x="6.6" y="7.5" width="4.4" height="3.2" fill="#eee"/></svg>
  <!-- volume -->
  <svg class="abs" style="left:1239px;top:5px" width="12" height="11" viewBox="0 0 12 11"><path d="M0 3.5 H2.5 L5.5 0.5 V10.5 L2.5 7.5 H0 Z" fill="#eee"/><path d="M7 3.5 Q8.2 5.5 7 7.5" stroke="#eee" stroke-width="1.2" fill="none"/><path d="M9 2 Q11 5.5 9 9" stroke="#888" stroke-width="1.1" fill="none"/></svg>
  <!-- power -->
  <svg class="abs" style="left:1258px;top:5px" width="11" height="11" viewBox="0 0 11 11"><path d="M3 2.6 A4.3 4.3 0 1 0 8 2.6" stroke="#eee" stroke-width="1.4" fill="none"/><rect x="4.8" y="0" width="1.4" height="5.5" fill="#eee"/></svg>
</div>

<div id="win" class="abs">
  <div id="hdr" class="abs">
    <div class="t" style="left:53.5px;top:10px;font-size:9.5px;font-weight:bold;color:#2e2e2e">Disks</div>
    <div class="abs" style="left:106px;top:4px;width:22px;height:22px;border-radius:3px;background:#f3f2f0;box-shadow:0 0 0 .5px rgba(0,0,0,.04)"></div>
    <svg class="abs" style="left:112px;top:10px" width="10" height="10" viewBox="0 0 10 10"><rect x="0.5" y="1" width="9" height="1.5" rx=".5" fill="#3a3a3a"/><rect x="0.5" y="4.3" width="9" height="1.5" rx=".5" fill="#3a3a3a"/><rect x="0.5" y="7.6" width="9" height="1.5" rx=".5" fill="#3a3a3a"/></svg>
    <svg class="abs" style="left:580.4px;top:10.9px" width="8" height="8" viewBox="0 0 8 8"><path d="M1.3 1.3 L6.7 6.7 M6.7 1.3 L1.3 6.7" stroke="#2e2e2e" stroke-width="1.5"/></svg>
  </div>
  <div id="hsep" class="abs"></div>
  <div id="side" class="abs">
    <svg class="abs" style="left:3px;top:3.6px" width="17" height="20" viewBox="0 0 17 20"><defs><linearGradient id="dg0" x1="0" y1="0" x2="1" y2="0"><stop offset="0" stop-color="#dcdcdb"/><stop offset=".25" stop-color="#f1f1f0"/><stop offset="1" stop-color="#e9e9e8"/></linearGradient></defs><rect x="1.1" y="0.4" width="14.8" height="18.4" rx="1.8" fill="url(#dg0)" stroke="#d3d3d1" stroke-width=".5"/><circle cx="8.5" cy="9" r="5.2" fill="none" stroke="#dededd" stroke-width=".9"/><rect x="1.1" y="17.8" width="14.8" height="2" rx=".9" fill="#444"/></svg>
    <div class="ti" style="top:4.2px;transform:scaleX(0.891)">1.0 TB Disk</div>
    <div class="st" style="top:15.9px;transform:scaleX(0.912)">CT1000P3PSSD8</div>
    <svg class="abs" style="left:4.3px;top:31.25px" width="15" height="19" viewBox="0 0 15 19"><defs><linearGradient id="sg" x1="0" y1="0" x2="0" y2="1"><stop offset="0" stop-color="#3d6fb3"/><stop offset="1" stop-color="#3479d6"/></linearGradient></defs><path d="M2 0 H12.4 L14.6 2.2 V16.4 A2 2 0 0 1 12.6 18.4 H2 A2 2 0 0 1 0 16.4 V2 A2 2 0 0 1 2 0 Z" fill="url(#sg)"/><rect x="1.95" y="2.45" width="10.8" height="10" fill="#f7f7f9"/><path d="M1.95 10.2 Q4 8.6 6.5 9.2 T12.75 9.8 V12.4 H1.95 Z" fill="#d8383f"/><rect x="1.95" y="12.4" width="10.8" height="1" fill="#c9d3e8"/></svg>
    <div class="ti" style="top:31.6px;transform:scaleX(0.908)">SD Card Reader</div>
    <div class="st" style="top:43.3px;transform:scaleX(0.874)">SDABC</div>
    <svg class="abs" style="left:3px;top:58.4px" width="17" height="20" viewBox="0 0 17 20"><defs><linearGradient id="dg2" x1="0" y1="0" x2="1" y2="0"><stop offset="0" stop-color="#dcdcdb"/><stop offset=".25" stop-color="#f1f1f0"/><stop offset="1" stop-color="#e9e9e8"/></linearGradient></defs><rect x="1.1" y="0.4" width="14.8" height="18.4" rx="1.8" fill="url(#dg2)" stroke="#d3d3d1" stroke-width=".5"/><circle cx="8.5" cy="9" r="5.2" fill="none" stroke="#dededd" stroke-width=".9"/><rect x="1.1" y="17.8" width="14.8" height="2" rx=".9" fill="#444"/></svg>
    <div class="ti" style="top:59.0px;transform:scaleX(0.925)">31 GB Thumb Drive</div>
    <div class="st" style="top:70.7px;transform:scaleX(0.928)">Kingston DataTraveler 3.0</div>
    <div class="abs" style="left:2px;top:85px;width:19.7px;height:14px;background:#f9a03c"></div><div class="abs" style="left:2px;top:99px;width:19.7px;height:3px;background:#fdf0e0"></div><div class="abs" style="left:3.2px;top:102px;width:16.6px;height:1.2px;background:#585d66;border-radius:1px"></div><div class="abs" style="left:2px;top:103.2px;width:19.7px;height:1.6px;background:#e4e7eb"></div>
    <div class="ti" style="top:86.4px;transform:scaleX(0.930)">262 KB Block Device</div>
    <div class="st" style="top:98.1px;transform:scaleX(0.978)">/dev/mtdblock0</div>
    <div class="abs" style="left:2px;top:113px;width:19.7px;height:14px;background:#f9a03c"></div><div class="abs" style="left:2px;top:127px;width:19.7px;height:3px;background:#fdf0e0"></div><div class="abs" style="left:3.2px;top:130px;width:16.6px;height:1.2px;background:#585d66;border-radius:1px"></div><div class="abs" style="left:2px;top:131.2px;width:19.7px;height:1.6px;background:#e4e7eb"></div>
    <div class="ti" style="top:113.8px;transform:scaleX(0.921)">3.1 MB Block Device</div>
    <div class="st" style="top:125.5px;transform:scaleX(0.952)">/dev/mtdblock1</div>
    <div class="abs" style="left:2px;top:140px;width:19.7px;height:14px;background:#f9a03c"></div><div class="abs" style="left:2px;top:154px;width:19.7px;height:3px;background:#fdf0e0"></div><div class="abs" style="left:3.2px;top:157px;width:16.6px;height:1.2px;background:#585d66;border-radius:1px"></div><div class="abs" style="left:2px;top:158.2px;width:19.7px;height:1.6px;background:#e4e7eb"></div>
    <div class="ti" style="top:141.2px;transform:scaleX(0.930)">1.0 MB Block Device</div>
    <div class="st" style="top:152.9px;transform:scaleX(0.968)">/dev/mtdblock2</div>
  </div>
  <!-- empty state -->
  <svg class="abs" style="left:321px;top:129px" width="90" height="100" viewBox="0 0 90 100">
    <defs><mask id="gap"><rect x="0" y="0" width="90" height="100" fill="#fff"/><rect x="2.7" y="2.5" width="69.3" height="74.4" rx="18" fill="#000"/></mask></defs>
    <rect x="24.3" y="29.9" width="58.3" height="62.85" rx="13" fill="#919191" mask="url(#gap)"/>
    <path fill="#919191" fill-rule="evenodd" d="M21.2 8 H53.5 A13 13 0 0 1 66.5 21 V58.4 A13 13 0 0 1 53.5 71.4 H21.2 A13 13 0 0 1 8.2 58.4 V21 A13 13 0 0 1 21.2 8 Z M22.7 18.2 A4 4 0 0 0 18.7 22.2 V52 A4 4 0 0 0 22.7 56 H51.6 A4 4 0 0 0 55.6 52 V22.2 A4 4 0 0 0 51.6 18.2 Z"/>
    <path fill="#919191" d="M24.2 37.1 A12.6 12.6 0 1 1 36.8 49.7 H24.2 Z M37.3 31.9 A5.4 5.4 0 1 0 37.3 42.7 A5.4 5.4 0 1 0 37.3 31.9 Z" fill-rule="evenodd"/>
  </svg>
  <div class="t" style="left:276px;top:249.7px;font-size:21.2px;color:#787878;transform:scaleX(.97);transform-origin:0 0">No Device Selected</div>
  <div class="t" style="left:309px;top:283px;font-size:10.3px;color:#3a3a3a;transform:scaleX(.91);transform-origin:0 0;-webkit-text-stroke:.22px #3a3a3a">Select a device to manage.</div>
</div>
</body></html>
